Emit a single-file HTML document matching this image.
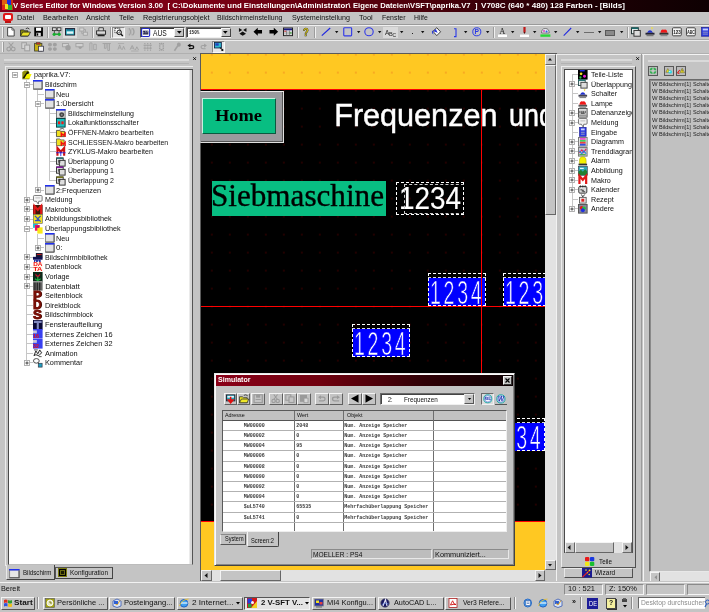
<!DOCTYPE html>
<html><head><meta charset="utf-8">
<style>
*{box-sizing:border-box;margin:0;padding:0}
html,body{width:709px;height:612px;overflow:hidden;background:#c4c4c4;font-family:"Liberation Sans",sans-serif;font-size:8px;color:#222}
.a{position:absolute}
.t{position:absolute;white-space:nowrap;line-height:1;transform-origin:0 0}
.sunk{position:absolute;border:1px solid;border-color:#777 #f2f2f2 #f2f2f2 #777}
.rais{position:absolute;border:1px solid;border-color:#f6f6f6 #666 #666 #f6f6f6}
svg{position:absolute;overflow:visible}
</style></head><body>
<div id="w" style="position:absolute;left:0;top:0;width:709px;height:612px;will-change:transform">
<div class="a" style="left:0px;top:0px;width:709px;height:11.5px;background:linear-gradient(90deg,#86001a 0%,#7a0014 30%,#4a000b 60%,#1c0004 85%,#0e0002 100%);"></div>
<div class="a" style="left:2px;top:0px;width:10.5px;height:10px;background:#d03010;"></div>
<div class="a" style="left:2px;top:0px;width:4.6px;height:5px;background:#e06010;"></div>
<div class="a" style="left:6.6px;top:0px;width:4.8px;height:4.6px;background:#1830e0;"></div>
<div class="a" style="left:7px;top:4.6px;width:5.3px;height:5.4px;background:#30b030;"></div>
<div class="a" style="left:5px;top:4px;width:3.4px;height:4.6px;background:#f0e020;"></div>
<div class="a" style="left:2px;top:6.5px;width:3.4px;height:3.5px;background:#e02020;"></div>
<div class="t" style="left:13.30px;top:1.59px;font-size:7.8px;color:#fff;font-weight:bold;transform:scaleX(0.9877);">V Series Editor for Windows Version 3.00</div>
<div class="t" style="left:167.60px;top:1.59px;font-size:7.8px;color:#fff;font-weight:bold;">[ C:\Dokumente und Einstellungen\Administrator\</div>
<div class="t" style="left:353.40px;top:1.59px;font-size:7.8px;color:#fff;font-weight:bold;transform:scaleX(0.9829);">Eigene Dateien\VSFT\paprika.V7</div>
<div class="t" style="left:474.50px;top:1.59px;font-size:7.8px;color:#fff;font-weight:bold;transform:scaleX(0.9625);">]</div>
<div class="t" style="left:481.00px;top:1.59px;font-size:7.8px;color:#fff;font-weight:bold;transform:scaleX(1.0348);">V708C (640 * 480) 128 Farben - [Bilds]</div>
<div class="a" style="left:0px;top:11.5px;width:709px;height:13px;background:#c4c4c4;"></div>
<div class="a" style="left:3.2px;top:13.3px;width:9.6px;height:7.6px;background:#e01818;border-radius:2px"></div>
<div class="a" style="left:5px;top:15px;width:6px;height:4px;background:#fff;border-radius:1px"></div>
<div class="a" style="left:5px;top:21px;width:6px;height:1.8px;background:#c01010;"></div>
<div class="t" style="left:17.10px;top:13.79px;font-size:7.6px;color:#101010;transform:scaleX(0.9694);">Datei</div>
<div class="t" style="left:42.50px;top:13.79px;font-size:7.6px;color:#101010;transform:scaleX(0.9575);">Bearbeiten</div>
<div class="t" style="left:86.00px;top:13.79px;font-size:7.6px;color:#101010;transform:scaleX(0.9630);">Ansicht</div>
<div class="t" style="left:119.00px;top:13.79px;font-size:7.6px;color:#101010;transform:scaleX(0.9597);">Teile</div>
<div class="t" style="left:142.50px;top:13.79px;font-size:7.6px;color:#101010;transform:scaleX(0.9599);">Registrierungsobjekt</div>
<div class="t" style="left:217.00px;top:13.79px;font-size:7.6px;color:#101010;transform:scaleX(0.9175);">Bildschirmeinstellung</div>
<div class="t" style="left:292.00px;top:13.79px;font-size:7.6px;color:#101010;transform:scaleX(0.9404);">Systemeinstellung</div>
<div class="t" style="left:359.00px;top:13.79px;font-size:7.6px;color:#101010;transform:scaleX(0.9826);">Tool</div>
<div class="t" style="left:381.50px;top:13.79px;font-size:7.6px;color:#101010;transform:scaleX(0.9121);">Fenster</div>
<div class="t" style="left:414.30px;top:13.79px;font-size:7.6px;color:#101010;transform:scaleX(0.9011);">Hilfe</div>
<div class="a" style="left:0px;top:24px;width:709px;height:1px;background:#9a9a9a;"></div>
<div class="a" style="left:0px;top:25px;width:709px;height:1px;background:#f0f0f0;"></div>
<div class="a" style="left:0px;top:39px;width:709px;height:1px;background:#a8a8a8;"></div>
<div class="a" style="left:0px;top:40px;width:709px;height:1px;background:#ececec;"></div>
<div class="a" style="left:0px;top:52.5px;width:709px;height:1px;background:#b0b0b0;"></div>
<div class="a" style="left:0px;top:54px;width:709px;height:1.8px;background:#dedede;"></div>
<div class="a" style="left:1.5px;top:27px;width:1px;height:10.5px;background:#f0f0f0;"></div>
<div class="a" style="left:2.5px;top:27px;width:1px;height:10.5px;background:#9c9c9c;"></div>
<div class="a" style="left:1.5px;top:41.5px;width:1px;height:10.5px;background:#f0f0f0;"></div>
<div class="a" style="left:2.5px;top:41.5px;width:1px;height:10.5px;background:#9c9c9c;"></div>
<svg style="left:7.10px;top:27.30px" width="7.800000000000001" height="9.6" viewBox="0 0 10 10" preserveAspectRatio="none"><path d="M0.8 0.6H6.5L9.2 3V9.4H0.8Z" fill="#fff" stroke="#333" stroke-width="1"/><path d="M6.3 0.6V3.2H9" stroke="#333" stroke-width="0.8" fill="none"/></svg>
<svg style="left:20.00px;top:27.30px" width="10.5" height="9.6" viewBox="0 0 10 10" preserveAspectRatio="none"><path d="M0.5 3H3.5L4.5 4H7.5V9.4H0.5Z" fill="#8a8a10" stroke="#222" stroke-width="0.8"/><path d="M0.5 9.4L2.5 5.3H10L8 9.4Z" fill="#e8e028" stroke="#222" stroke-width="0.8"/><path d="M5.5 1.8Q7.5 0 9 2.2" stroke="#222" stroke-width="0.8" fill="none"/></svg>
<svg style="left:33.50px;top:27.30px" width="9.200000000000003" height="9.6" viewBox="0 0 10 10" preserveAspectRatio="none"><rect x="0.3" y="0.3" width="9.4" height="9.4" fill="#000"/><rect x="2.2" y="0.8" width="5.6" height="3.2" fill="#fff"/><rect x="2.6" y="6" width="4.8" height="3.4" fill="#e0e0e0"/><rect x="3.2" y="6.6" width="1.4" height="2.4" fill="#000"/></svg>
<div class="a" style="left:47px;top:26.5px;width:1px;height:11.5px;background:#9c9c9c;"></div>
<div class="a" style="left:48px;top:26.5px;width:1px;height:11.5px;background:#f0f0f0;"></div>
<svg style="left:51.60px;top:27.30px" width="9.399999999999999" height="9.6" viewBox="0 0 10 10" preserveAspectRatio="none"><rect x="0.5" y="0.8" width="4" height="3" fill="#ddd" stroke="#222" stroke-width="0.8"/><rect x="5.5" y="0.8" width="4" height="3" fill="#ddd" stroke="#222" stroke-width="0.8"/><path d="M2.5 4V7.5H7.5V4" stroke="#222" stroke-width="0.8" fill="none"/><circle cx="2.3" cy="7.6" r="1.7" fill="#18b030"/><circle cx="7.7" cy="7.6" r="1.7" fill="#18b030"/><path d="M2.3 7.6H7.7" stroke="#18b030" stroke-width="1.2"/></svg>
<div class="a" style="left:63.3px;top:26.6px;width:14px;height:11.4px;background:#dcdcdc;"></div>
<svg style="left:65.20px;top:27.30px" width="10.099999999999994" height="9.6" viewBox="0 0 10 10" preserveAspectRatio="none"><rect x="0.5" y="1.6" width="9" height="6.8" fill="#28b0c0" stroke="#223" stroke-width="1"/><rect x="1.8" y="4.6" width="6.4" height="2.4" fill="#e8f4f8"/><path d="M1.5 3H8.5" stroke="#125" stroke-width="0.8"/></svg>
<svg style="left:78.70px;top:27.30px" width="9.299999999999997" height="9.6" viewBox="0 0 10 10" preserveAspectRatio="none"><rect x="0.8" y="1" width="4.4" height="3.2" fill="#d4d4d4" stroke="#a2a2a2" stroke-width="0.9"/><rect x="4.6" y="5.4" width="4.4" height="3.2" fill="#d4d4d4" stroke="#a2a2a2" stroke-width="0.9"/><path d="M3 4.5V7H4.6M7 5V2.6H5.4" stroke="#a2a2a2" stroke-width="0.9" fill="none"/></svg>
<div class="a" style="left:92px;top:26.5px;width:1px;height:11.5px;background:#9c9c9c;"></div>
<div class="a" style="left:93px;top:26.5px;width:1px;height:11.5px;background:#f0f0f0;"></div>
<svg style="left:95.60px;top:27.30px" width="10.200000000000003" height="9.6" viewBox="0 0 10 10" preserveAspectRatio="none"><path d="M2.8 4V0.8H7.2V4" fill="#fff" stroke="#222" stroke-width="0.9"/><rect x="0.6" y="4" width="8.8" height="3.6" fill="#d8d8d8" stroke="#222" stroke-width="0.9"/><path d="M1.5 9H8.5" stroke="#222" stroke-width="1.3"/><path d="M3.4 2.2H6.6" stroke="#888" stroke-width="0.6"/></svg>
<div class="a" style="left:110px;top:26.5px;width:1px;height:11.5px;background:#9c9c9c;"></div>
<div class="a" style="left:111px;top:26.5px;width:1px;height:11.5px;background:#f0f0f0;"></div>
<div class="a" style="left:112px;top:26.6px;width:13.2px;height:11.4px;background:#e6e6e6;border:1px solid;border-color:#8a8a8a #f6f6f6 #f6f6f6 #8a8a8a"></div>
<svg style="left:114.30px;top:27.30px" width="9.299999999999997" height="9.6" viewBox="0 0 10 10" preserveAspectRatio="none"><rect x="1" y="1.4" width="5.4" height="4.6" fill="#fff" stroke="#222" stroke-width="0.9" stroke-dasharray="1.2 0.7"/><circle cx="5.6" cy="5.6" r="2.4" fill="none" stroke="#111" stroke-width="1"/><path d="M7.3 7.3L9.5 9.5" stroke="#111" stroke-width="1.5"/></svg>
<svg style="left:127.00px;top:27.30px" width="10" height="9.6" viewBox="0 0 10 10" preserveAspectRatio="none"><path d="M2 1.2Q5 5 2 8.8M5.5 1.2Q8.5 5 5.5 8.8" stroke="#a2a2a2" stroke-width="1.3" fill="none"/><path d="M1 1.2V8.8M4.6 1.2V8.8" stroke="#b4b4b4" stroke-width="0.8"/></svg>
<div class="a" style="left:139.6px;top:26.6px;width:45px;height:11.6px;background:#fff;border:1px solid;border-color:#555 #f0f0f0 #f0f0f0 #555;box-shadow:inset 1px 1px 0 #333"></div>
<svg style="left:141.20px;top:28.00px" width="9.2" height="9" viewBox="0 0 10 10" preserveAspectRatio="none"><rect x="0.6" y="0.6" width="8.8" height="8.8" rx="1.4" fill="#fff" stroke="#2028c8" stroke-width="1.2"/><rect x="2" y="3" width="6" height="4.2" fill="#181838"/><path d="M2.8 4V6.2M4.5 4V6.2M4.5 4H5.8M6.5 4V6.2M6.5 4H7.6" stroke="#e8e8ff" stroke-width="0.6"/></svg>
<div class="t" style="left:152.90px;top:28.70px;font-size:8.4px;color:#101010;transform:scaleX(0.7990);">AUS</div>
<div class="a" style="left:174.3px;top:28px;width:9.6px;height:9.4px;background:#c4c4c4;border:1px solid;border-color:#f4f4f4 #444 #444 #f4f4f4"></div>
<svg style="left:176.70px;top:31.40px" width="4.6" height="2.8" viewBox="0 0 5 3" preserveAspectRatio="none"><path d="M0 0H5L2.5 3Z" fill="#000"/></svg>
<div class="a" style="left:185.8px;top:26.6px;width:45.7px;height:11.6px;background:#fff;border:1px solid;border-color:#666 #f0f0f0 #f0f0f0 #666;box-shadow:inset 1px 1px 0 #444"></div>
<div class="t" style="left:188.60px;top:29.76px;font-size:5.6px;color:#222;font-family:'Liberation Mono',monospace;font-weight:bold;transform:scaleX(0.7737);">150%</div>
<div class="a" style="left:221px;top:28px;width:9.6px;height:9.4px;background:#c4c4c4;border:1px solid;border-color:#f4f4f4 #444 #444 #f4f4f4"></div>
<svg style="left:223.40px;top:31.40px" width="4.6" height="2.8" viewBox="0 0 5 3" preserveAspectRatio="none"><path d="M0 0H5L2.5 3Z" fill="#000"/></svg>
<svg style="left:238.00px;top:27.30px" width="9.400000000000006" height="9.6" viewBox="0 0 10 10" preserveAspectRatio="none"><path d="M1 1L4.5 3.2L1 5.2ZM9 1L5.5 3.2L9 5.2ZM5 4.8L8.5 7L5 9.2ZM5 4.8L1.5 7L5 9.2Z" fill="#111"/></svg>
<svg style="left:252.50px;top:27.30px" width="9.5" height="9.6" viewBox="0 0 10 10" preserveAspectRatio="none"><path d="M0.5 5L5 0.8V3.2H9.5V6.8H5V9.2Z" fill="#000"/></svg>
<svg style="left:269.00px;top:27.30px" width="9.600000000000023" height="9.6" viewBox="0 0 10 10" preserveAspectRatio="none"><path d="M9.5 5L5 0.8V3.2H0.5V6.8H5V9.2Z" fill="#000"/></svg>
<svg style="left:283.00px;top:27.30px" width="10" height="9.6" viewBox="0 0 10 10" preserveAspectRatio="none"><rect x="0.5" y="1" width="9" height="8" fill="#fff" stroke="#222" stroke-width="1"/><rect x="1" y="1.5" width="8" height="2" fill="#1a1a80"/><path d="M1 5.3H9M1 7.2H9M3.6 3.5V9M6.4 3.5V9" stroke="#555" stroke-width="0.6"/><rect x="1.2" y="3.8" width="2" height="1.2" fill="#d04040"/><rect x="6.6" y="5.6" width="2" height="1.2" fill="#30a030"/></svg>
<div class="a" style="left:297px;top:26.5px;width:1px;height:11.5px;background:#9c9c9c;"></div>
<div class="a" style="left:298px;top:26.5px;width:1px;height:11.5px;background:#f0f0f0;"></div>
<svg style="left:301.50px;top:27.30px" width="8.100000000000023" height="9.6" viewBox="0 0 10 10" preserveAspectRatio="none"><text x="1.2" y="9.3" font-size="11.5" font-weight="bold" font-family="Liberation Sans" fill="#222" stroke="#222" stroke-width="0.6">?</text><text x="1.2" y="9.3" font-size="11.5" font-weight="bold" font-family="Liberation Sans" fill="#c8b818">?</text></svg>
<div class="a" style="left:314px;top:26.5px;width:1px;height:11.5px;background:#9c9c9c;"></div>
<div class="a" style="left:315px;top:26.5px;width:1px;height:11.5px;background:#f0f0f0;"></div>
<svg style="left:321.00px;top:27.30px" width="10" height="9.6" viewBox="0 0 10 10" preserveAspectRatio="none"><path d="M0.8 9L9.2 1" stroke="#2028e0" stroke-width="1.2"/></svg>
<svg style="left:335.30px;top:31.00px" width="3.4" height="2.2" viewBox="0 0 4 2.5" preserveAspectRatio="none"><path d="M0 0H4L2 2.5Z" fill="#111"/></svg>
<svg style="left:343.00px;top:27.30px" width="9.399999999999977" height="9.6" viewBox="0 0 10 10" preserveAspectRatio="none"><rect x="0.8" y="0.8" width="8.4" height="8.4" rx="0.8" fill="none" stroke="#3038e8" stroke-width="1.2"/></svg>
<svg style="left:356.80px;top:31.00px" width="3.4" height="2.2" viewBox="0 0 4 2.5" preserveAspectRatio="none"><path d="M0 0H4L2 2.5Z" fill="#111"/></svg>
<svg style="left:364.00px;top:27.30px" width="10" height="9.6" viewBox="0 0 10 10" preserveAspectRatio="none"><circle cx="5" cy="5" r="4.2" fill="none" stroke="#3038e8" stroke-width="1.1"/></svg>
<svg style="left:378.30px;top:31.00px" width="3.4" height="2.2" viewBox="0 0 4 2.5" preserveAspectRatio="none"><path d="M0 0H4L2 2.5Z" fill="#111"/></svg>
<div class="a" style="left:383.4px;top:26.8px;width:15px;height:11.2px;background:#dadada;"></div>
<svg style="left:385.00px;top:28.50px" width="12" height="8" viewBox="0 0 12 8" preserveAspectRatio="none"><text x="0" y="5.6" font-size="6.4" font-family="Liberation Sans" fill="#222">A</text><text x="4" y="6.8" font-size="5.6" font-family="Liberation Sans" fill="#222">B</text><text x="7.6" y="7.8" font-size="5" font-family="Liberation Sans" fill="#222">C</text></svg>
<svg style="left:400.30px;top:31.00px" width="3.4" height="2.2" viewBox="0 0 4 2.5" preserveAspectRatio="none"><path d="M0 0H4L2 2.5Z" fill="#111"/></svg>
<div class="a" style="left:411.5px;top:32.5px;width:1.3px;height:1.3px;background:#222;"></div>
<svg style="left:421.30px;top:31.00px" width="3.4" height="2.2" viewBox="0 0 4 2.5" preserveAspectRatio="none"><path d="M0 0H4L2 2.5Z" fill="#111"/></svg>
<svg style="left:432.00px;top:27.30px" width="9.5" height="9.6" viewBox="0 0 10 10" preserveAspectRatio="none"><path d="M1 4.5L5 0.8L9 5L5 9Z" fill="#fff" stroke="#222" stroke-width="0.9"/><path d="M1.2 4.5L4 2L6 6Z" fill="#2838d8"/><path d="M0.5 4Q0 7 1.5 7.5" stroke="#2838d8" stroke-width="1" fill="none"/></svg>
<svg style="left:453.00px;top:27.50px" width="4" height="9.4" viewBox="0 0 4 10" preserveAspectRatio="none"><path d="M1 0.8H3V9.2H1" stroke="#2838e8" stroke-width="1.1" fill="none"/></svg>
<svg style="left:464.30px;top:31.00px" width="3.4" height="2.2" viewBox="0 0 4 2.5" preserveAspectRatio="none"><path d="M0 0H4L2 2.5Z" fill="#111"/></svg>
<svg style="left:472.00px;top:27.30px" width="9.600000000000023" height="9.6" viewBox="0 0 10 10" preserveAspectRatio="none"><circle cx="5" cy="5" r="4.2" fill="none" stroke="#2838e8" stroke-width="1"/><text x="2.6" y="7.6" font-size="7" font-weight="bold" font-family="Liberation Sans" fill="#2838e8">P</text></svg>
<svg style="left:486.00px;top:31.00px" width="3.4" height="2.2" viewBox="0 0 4 2.5" preserveAspectRatio="none"><path d="M0 0H4L2 2.5Z" fill="#111"/></svg>
<div class="a" style="left:493px;top:26.5px;width:1px;height:11.5px;background:#9c9c9c;"></div>
<div class="a" style="left:494px;top:26.5px;width:1px;height:11.5px;background:#f0f0f0;"></div>
<svg style="left:498.00px;top:27.00px" width="9" height="10.4" viewBox="0 0 9 10.4" preserveAspectRatio="none"><text x="1.2" y="6.8" font-size="8.4" font-family="Liberation Serif" fill="#222">A</text><rect x="0" y="7.6" width="9" height="2.4" fill="#fff"/></svg>
<svg style="left:511.30px;top:31.00px" width="3.4" height="2.2" viewBox="0 0 4 2.5" preserveAspectRatio="none"><path d="M0 0H4L2 2.5Z" fill="#111"/></svg>
<svg style="left:520.00px;top:27.00px" width="9" height="10.4" viewBox="0 0 9 10.4" preserveAspectRatio="none"><rect x="3.4" y="0" width="2.2" height="5" fill="#c01818"/><path d="M3.4 5H5.6L4.5 7Z" fill="#601010"/><rect x="0" y="7.6" width="9" height="2.4" fill="#fff"/></svg>
<svg style="left:533.00px;top:31.00px" width="3.4" height="2.2" viewBox="0 0 4 2.5" preserveAspectRatio="none"><path d="M0 0H4L2 2.5Z" fill="#111"/></svg>
<svg style="left:540.00px;top:27.00px" width="10.7" height="10.4" viewBox="0 0 10.7 10.4" preserveAspectRatio="none"><path d="M1.5 6Q1.5 1.5 5.3 1.5Q9.2 1.5 9.2 6Z" fill="#e8e8f0" stroke="#555" stroke-width="0.7"/><circle cx="4" cy="4" r="1" fill="#e040c0"/><circle cx="6.6" cy="4.6" r="1" fill="#3060e0"/><rect x="0.4" y="7.4" width="10" height="2.4" fill="#28d838"/></svg>
<svg style="left:554.30px;top:31.00px" width="3.4" height="2.2" viewBox="0 0 4 2.5" preserveAspectRatio="none"><path d="M0 0H4L2 2.5Z" fill="#111"/></svg>
<svg style="left:562.80px;top:27.30px" width="8.900000000000091" height="9.6" viewBox="0 0 10 10" preserveAspectRatio="none"><path d="M0.8 9L9.2 1" stroke="#2028e0" stroke-width="1.2"/></svg>
<svg style="left:576.30px;top:31.00px" width="3.4" height="2.2" viewBox="0 0 4 2.5" preserveAspectRatio="none"><path d="M0 0H4L2 2.5Z" fill="#111"/></svg>
<div class="a" style="left:583.5px;top:32.2px;width:10.5px;height:1.2px;background:#6c6c6c;"></div>
<svg style="left:598.30px;top:31.00px" width="3.4" height="2.2" viewBox="0 0 4 2.5" preserveAspectRatio="none"><path d="M0 0H4L2 2.5Z" fill="#111"/></svg>
<div class="a" style="left:605px;top:29.5px;width:10px;height:6.2px;background:#8a8a8a;border:1px solid #5a5a5a"></div>
<svg style="left:619.70px;top:31.00px" width="3.4" height="2.2" viewBox="0 0 4 2.5" preserveAspectRatio="none"><path d="M0 0H4L2 2.5Z" fill="#111"/></svg>
<div class="a" style="left:626.5px;top:26.5px;width:1px;height:11.5px;background:#9c9c9c;"></div>
<div class="a" style="left:627.5px;top:26.5px;width:1px;height:11.5px;background:#f0f0f0;"></div>
<svg style="left:630.70px;top:27.30px" width="9.799999999999955" height="9.6" viewBox="0 0 10 10" preserveAspectRatio="none"><rect x="0.5" y="0.8" width="7" height="6.2" fill="#e8f0f0" stroke="#233" stroke-width="1"/><rect x="0.5" y="0.5" width="7" height="1.6" fill="#186868"/><rect x="3" y="3.6" width="6.5" height="6" fill="#ddd" stroke="#333" stroke-width="1"/></svg>
<svg style="left:645.00px;top:27.30px" width="10" height="9.6" viewBox="0 0 10 10" preserveAspectRatio="none"><path d="M6 0L8.4 0.8L6.8 2.6" fill="#f0e040"/><path d="M2 6Q5 1 8 6Z" fill="#2030d0"/><rect x="0.5" y="6" width="9" height="2" fill="#223"/><rect x="1.5" y="8" width="7" height="1.6" fill="#777"/></svg>
<svg style="left:658.70px;top:27.30px" width="9.899999999999977" height="9.6" viewBox="0 0 10 10" preserveAspectRatio="none"><path d="M1.5 6Q2 1.5 5 2.8Q8 1.5 8.5 6Z" fill="#f01818"/><rect x="0.5" y="6" width="9" height="2" fill="#333"/><rect x="1.5" y="8" width="7" height="1.6" fill="#888"/></svg>
<svg style="left:672.00px;top:27.30px" width="9.799999999999955" height="9.6" viewBox="0 0 10 10" preserveAspectRatio="none"><rect x="0.5" y="0.8" width="9" height="8.4" rx="1" fill="#f4f4f4" stroke="#333" stroke-width="0.9"/><text x="1.2" y="7" font-size="5" font-weight="bold" font-family="Liberation Sans" fill="#222" textLength="7.6" lengthAdjust="spacingAndGlyphs">123</text></svg>
<svg style="left:686.00px;top:27.30px" width="9.799999999999955" height="9.6" viewBox="0 0 10 10" preserveAspectRatio="none"><rect x="0.5" y="0.8" width="9" height="8.4" rx="1" fill="#f4f4f4" stroke="#333" stroke-width="0.9"/><text x="1.2" y="7" font-size="5" font-weight="bold" font-family="Liberation Sans" fill="#222" textLength="7.6" lengthAdjust="spacingAndGlyphs">ABC</text></svg>
<svg style="left:700.80px;top:27.30px" width="8.700000000000045" height="9.6" viewBox="0 0 10 10" preserveAspectRatio="none"><rect x="0.6" y="0.4" width="8.8" height="9.2" fill="#2838e0" stroke="#1a1a90" stroke-width="0.7"/><rect x="2" y="1.6" width="6" height="2" fill="#c8d0ff"/><path d="M2 5.4H8M2 7.4H8" stroke="#aab" stroke-width="0.9"/></svg>
<svg style="left:6.00px;top:41.60px" width="10" height="9.6" viewBox="0 0 10 10" preserveAspectRatio="none"><circle cx="2.8" cy="7.4" r="1.9" fill="none" stroke="#a0a0a0" stroke-width="1.2"/><circle cx="7.2" cy="7.4" r="1.9" fill="none" stroke="#a0a0a0" stroke-width="1.2"/><path d="M2.6 0.5L7 5.6M7.4 0.5L3 5.6" stroke="#a0a0a0" stroke-width="1.1"/></svg>
<svg style="left:20.60px;top:41.60px" width="9.399999999999999" height="9.6" viewBox="0 0 10 10" preserveAspectRatio="none"><rect x="0.8" y="0.8" width="5" height="6" fill="#d4d4d4" stroke="#a0a0a0" stroke-width="1.1"/><rect x="4" y="3.2" width="5.2" height="6" fill="#d4d4d4" stroke="#a0a0a0" stroke-width="1.1"/></svg>
<svg style="left:33.90px;top:41.60px" width="9.800000000000004" height="9.6" viewBox="0 0 10 10" preserveAspectRatio="none"><rect x="0.6" y="1.4" width="7.4" height="8" fill="#c8b010" stroke="#443" stroke-width="0.9"/><rect x="2.4" y="0.4" width="3.8" height="2" fill="#c03020" stroke="#443" stroke-width="0.5"/><rect x="4.6" y="4.4" width="5" height="5.2" fill="#f4f4f4" stroke="#334" stroke-width="0.8"/></svg>
<svg style="left:47.40px;top:41.60px" width="10.600000000000001" height="9.6" viewBox="0 0 10 10" preserveAspectRatio="none"><circle cx="2.8" cy="2.8" r="1.9" fill="#a0a0a0"/><circle cx="7.4" cy="2.8" r="1.9" fill="#a0a0a0"/><circle cx="2.8" cy="7.4" r="1.9" fill="#a0a0a0"/><circle cx="7.4" cy="7.4" r="1.9" fill="#a0a0a0"/></svg>
<svg style="left:61.80px;top:41.60px" width="9.700000000000003" height="9.6" viewBox="0 0 10 10" preserveAspectRatio="none"><rect x="0.6" y="1.6" width="6" height="3.4" fill="#d0d0d0" stroke="#a0a0a0" stroke-width="0.9"/><circle cx="6.2" cy="6" r="2.8" fill="#a0a0a0"/></svg>
<svg style="left:75.30px;top:41.60px" width="9.299999999999997" height="9.6" viewBox="0 0 10 10" preserveAspectRatio="none"><rect x="1" y="1.6" width="7.6" height="3.4" fill="#d0d0d0" stroke="#a0a0a0" stroke-width="0.9"/><path d="M3.4 5Q5.4 9.6 8 5Z" fill="#a0a0a0"/></svg>
<svg style="left:88.90px;top:41.60px" width="8.5" height="9.6" viewBox="0 0 10 10" preserveAspectRatio="none"><path d="M1 1V9M1 1H3.5V9M5.5 2.4H8.6V8H5.5Z" stroke="#a0a0a0" stroke-width="0.9" fill="none"/></svg>
<svg style="left:102.40px;top:41.60px" width="9.399999999999991" height="9.6" viewBox="0 0 10 10" preserveAspectRatio="none"><path d="M0.6 1.6H9.4M2.6 1.6V6.6H4.4V1.6M6.2 1.6V8.8H8V1.6" stroke="#a0a0a0" stroke-width="0.9" fill="none"/></svg>
<svg style="left:116.70px;top:41.60px" width="8.899999999999991" height="9.6" viewBox="0 0 10 10" preserveAspectRatio="none"><path d="M1 8L3 3L5 8M6 8L7.4 4.4L9 8M1.8 6.2H4.2" stroke="#a0a0a0" stroke-width="0.9" fill="none"/><path d="M1 1.6H8" stroke="#a0a0a0" stroke-width="0.7"/></svg>
<svg style="left:129.00px;top:41.60px" width="10.599999999999994" height="9.6" viewBox="0 0 10 10" preserveAspectRatio="none"><path d="M1 8L3 3.6L5 8M6 8.4L7.4 5L9 8.4M1.8 6.4H4.2" stroke="#a0a0a0" stroke-width="0.9" fill="none"/><path d="M2 9.4H9" stroke="#a0a0a0" stroke-width="0.7"/></svg>
<svg style="left:143.00px;top:41.60px" width="9.400000000000006" height="9.6" viewBox="0 0 10 10" preserveAspectRatio="none"><path d="M0.6 3.4H9.4M0.6 6.4H9.4" stroke="#a0a0a0" stroke-width="1"/><path d="M2 1V9M5 1V9M8 1V9" stroke="#a0a0a0" stroke-width="1.2" stroke-dasharray="1.4 0.9"/></svg>
<svg style="left:157.00px;top:41.60px" width="9" height="9.6" viewBox="0 0 10 10" preserveAspectRatio="none"><path d="M3 1V9M7 1V9" stroke="#a0a0a0" stroke-width="1.6" stroke-dasharray="1.6 0.8"/><path d="M5 0.6L6.6 2.6H3.4ZM5 9.4L6.6 7.4H3.4Z" fill="#a0a0a0"/></svg>
<svg style="left:172.50px;top:41.60px" width="8.900000000000006" height="9.6" viewBox="0 0 10 10" preserveAspectRatio="none"><circle cx="6.6" cy="2.8" r="2.2" fill="#a0a0a0"/><path d="M5.4 4L1.6 9.2" stroke="#a0a0a0" stroke-width="1.8"/></svg>
<svg style="left:186.90px;top:43.40px" width="7.8" height="6.4" viewBox="0 0 10 9" preserveAspectRatio="none"><path d="M2.4 8H6.2Q8.6 8 8.6 5.7Q8.6 3.6 6.2 3.6H3.4" stroke="#111" stroke-width="1.7" fill="none"/><path d="M4.4 0.6L0.6 3.6L4.4 6.6Z" fill="#111"/></svg>
<svg style="left:199.70px;top:43.40px" width="7.4" height="6.4" viewBox="0 0 10 9" preserveAspectRatio="none"><path d="M7.6 8H3.8Q1.4 8 1.4 5.7Q1.4 3.6 3.8 3.6H6.6" stroke="#a0a0a0" stroke-width="1.5" fill="none"/><path d="M5.6 0.6L9.4 3.6L5.6 6.6Z" fill="#a0a0a0"/></svg>
<div class="a" style="left:211.6px;top:41px;width:13.4px;height:11.6px;background:#e8e8e8;border:1px solid;border-color:#8a8a8a #f8f8f8 #f8f8f8 #8a8a8a"></div>
<svg style="left:213.60px;top:42.40px" width="9.8" height="9.2" viewBox="0 0 10 10" preserveAspectRatio="none"><rect x="0.5" y="0.5" width="7" height="6" fill="#30b8d0" stroke="#124" stroke-width="0.9"/><rect x="1.4" y="1.4" width="3.4" height="2.6" fill="#2040c0"/><path d="M6 6L9.4 9.4M7.6 9.4L9.4 7.6" stroke="#111" stroke-width="1.1"/></svg>
<div class="a" style="left:0px;top:54px;width:201px;height:528px;background:#c4c4c4;"></div>
<div class="a" style="left:4px;top:59px;width:185px;height:2.2px;background:#dadada;"></div>
<div class="a" style="left:4px;top:63px;width:185px;height:1px;background:#b2b2b2;"></div>
<svg style="left:193.00px;top:57.30px" width="3.2" height="3.2" viewBox="0 0 4 4" preserveAspectRatio="none"><path d="M0.3 0.3L3.7 3.7M3.7 0.3L0.3 3.7" stroke="#000" stroke-width="1.1"/></svg>
<div class="a" style="left:5px;top:66px;width:188px;height:500px;border-top:1px solid #ececec;border-left:1px solid #ececec"></div>
<div class="a" style="left:7.5px;top:69px;width:185px;height:496px;background:#fff;border:1px solid;border-color:#4a4a4a #555 #bcbcbc #4a4a4a;box-shadow:inset -2.5px 0 0 #d8d8d8"></div>
<div class="a" style="left:26.05px;top:80.1px;width:1px;height:282.85px;border-left:1px solid #c6c6c6"></div>
<div class="a" style="left:37.3px;top:89.695px;width:1px;height:100.54500000000002px;border-left:1px solid #c6c6c6"></div>
<div class="a" style="left:48.55px;top:108.88499999999999px;width:1px;height:71.75999999999999px;border-left:1px solid #c6c6c6"></div>
<div class="a" style="left:37.3px;top:233.62px;width:1px;height:14.189999999999998px;border-left:1px solid #c6c6c6"></div>
<svg style="left:12.30px;top:72.10px" width="6" height="6" viewBox="0 0 6 6" preserveAspectRatio="none"><rect x="0.5" y="0.5" width="5" height="5" fill="#fff" stroke="#a8a8a8" stroke-width="0.9"/><path d="M1.4 3H4.6" stroke="#333" stroke-width="0.9"/></svg>
<svg style="left:22.00px;top:70.20px" width="9.6" height="9.6" viewBox="0 0 10 10" preserveAspectRatio="none"><path d="M0.3 2.2L2.8 0.4H6.4L7.6 2.2V9.2H0.3Z" fill="#90900a"/><path d="M0.6 8.4L5.6 1.2L7.4 2.4L2.6 9.2Z" fill="#161600"/><path d="M2.2 9.4L5.2 4.2H10L7.6 9.4Z" fill="#f6f600"/><path d="M0.3 9.3H7.6" stroke="#55550a" stroke-width="0.6"/></svg>
<div class="t" style="left:33.90px;top:71.49px;font-size:7.6px;color:#101010;transform:scaleX(0.9520);">paprika.V7:</div>
<div class="a" style="left:26.55px;top:84.195px;width:6.699999999999999px;height:1px;border-top:1px solid #c6c6c6"></div>
<svg style="left:23.55px;top:81.69px" width="6" height="6" viewBox="0 0 6 6" preserveAspectRatio="none"><rect x="0.5" y="0.5" width="5" height="5" fill="#fff" stroke="#a8a8a8" stroke-width="0.9"/><path d="M1.4 3H4.6" stroke="#333" stroke-width="0.9"/></svg>
<svg style="left:33.25px;top:79.79px" width="9.6" height="9.6" viewBox="0 0 10 10" preserveAspectRatio="none"><rect x="0.5" y="1" width="9" height="8.5" fill="#e2e2e2" stroke="#8a8a8a" stroke-width="1"/><rect x="0" y="0" width="10" height="1.6" fill="#2030f0"/><path d="M0.5 9.5H9.5V1.5" stroke="#555" stroke-width="1" fill="none"/></svg>
<div class="t" style="left:45.15px;top:81.08px;font-size:7.6px;color:#101010;transform:scaleX(0.9044);">Bildschirm</div>
<div class="a" style="left:37.8px;top:93.78999999999999px;width:6.700000000000003px;height:1px;border-top:1px solid #c6c6c6"></div>
<svg style="left:44.50px;top:89.39px" width="9.6" height="9.6" viewBox="0 0 10 10" preserveAspectRatio="none"><rect x="0.5" y="1" width="9" height="8.5" fill="#e2e2e2" stroke="#8a8a8a" stroke-width="1"/><rect x="0" y="0" width="10" height="1.6" fill="#2030f0"/><path d="M0.5 9.5H9.5V1.5" stroke="#555" stroke-width="1" fill="none"/></svg>
<div class="t" style="left:56.40px;top:90.68px;font-size:7.6px;color:#101010;transform:scaleX(0.9611);">Neu</div>
<div class="a" style="left:37.8px;top:103.38499999999999px;width:6.700000000000003px;height:1px;border-top:1px solid #c6c6c6"></div>
<svg style="left:34.80px;top:100.88px" width="6" height="6" viewBox="0 0 6 6" preserveAspectRatio="none"><rect x="0.5" y="0.5" width="5" height="5" fill="#fff" stroke="#a8a8a8" stroke-width="0.9"/><path d="M1.4 3H4.6" stroke="#333" stroke-width="0.9"/></svg>
<svg style="left:44.50px;top:98.98px" width="9.6" height="9.6" viewBox="0 0 10 10" preserveAspectRatio="none"><rect x="0.5" y="1" width="9" height="8.5" fill="#e2e2e2" stroke="#8a8a8a" stroke-width="1"/><rect x="0" y="0" width="10" height="1.6" fill="#2030f0"/><path d="M0.5 9.5H9.5V1.5" stroke="#555" stroke-width="1" fill="none"/></svg>
<div class="t" style="left:56.40px;top:100.27px;font-size:7.6px;color:#101010;transform:scaleX(0.9782);">1:Übersicht</div>
<div class="a" style="left:49.05px;top:112.97999999999999px;width:6.700000000000003px;height:1px;border-top:1px solid #c6c6c6"></div>
<svg style="left:55.75px;top:108.58px" width="9.6" height="9.6" viewBox="0 0 10 10" preserveAspectRatio="none"><rect x="0.5" y="1" width="9" height="8.5" fill="#e2e2e2" stroke="#777" stroke-width="1"/><rect x="0" y="0" width="10" height="1.6" fill="#2030f0"/><circle cx="6" cy="6" r="2.6" fill="#444"/><circle cx="6" cy="6" r="1" fill="#888"/></svg>
<div class="t" style="left:67.65px;top:109.87px;font-size:7.6px;color:#101010;transform:scaleX(0.9245);">Bildschirmeinstellung</div>
<div class="a" style="left:49.05px;top:122.57499999999999px;width:6.700000000000003px;height:1px;border-top:1px solid #c6c6c6"></div>
<svg style="left:55.75px;top:118.17px" width="9.6" height="9.6" viewBox="0 0 10 10" preserveAspectRatio="none"><rect x="0.5" y="0.5" width="9" height="9" fill="#18c0c0" stroke="#0a4040" stroke-width="1"/><rect x="2" y="3.5" width="2.4" height="3" fill="#f01818"/><rect x="5.6" y="3.5" width="2.4" height="3" fill="#f01818"/></svg>
<div class="t" style="left:67.65px;top:119.46px;font-size:7.6px;color:#101010;transform:scaleX(0.9428);">Lokalfunktionsschalter</div>
<div class="a" style="left:49.05px;top:132.17000000000002px;width:6.700000000000003px;height:1px;border-top:1px solid #c6c6c6"></div>
<svg style="left:55.75px;top:127.77px" width="9.6" height="9.6" viewBox="0 0 10 10" preserveAspectRatio="none"><path d="M0.5 2.5H4L5 3.5H9V9H0.5Z" fill="#f0e020" stroke="#333" stroke-width="0.8"/><path d="M4 1.2L7 0.5L8.5 1.5" stroke="#222" stroke-width="0.8" fill="none"/><path d="M5.5 9.5V5.5L7.5 7.5L9.5 5.5V9.5" stroke="#f01010" stroke-width="1.5" fill="none"/></svg>
<div class="t" style="left:67.65px;top:129.06px;font-size:7.6px;color:#101010;transform:scaleX(0.9212);">ÖFFNEN-Makro bearbeiten</div>
<div class="a" style="left:49.05px;top:141.765px;width:6.700000000000003px;height:1px;border-top:1px solid #c6c6c6"></div>
<svg style="left:55.75px;top:137.36px" width="9.6" height="9.6" viewBox="0 0 10 10" preserveAspectRatio="none"><path d="M0.5 2H4L5 3H8.5V9H0.5Z" fill="#f0e020" stroke="#555" stroke-width="0.8"/><path d="M5.5 9.5V5.5L7.5 7.5L9.5 5.5V9.5" stroke="#f01010" stroke-width="1.5" fill="none"/></svg>
<div class="t" style="left:67.65px;top:138.65px;font-size:7.6px;color:#101010;transform:scaleX(0.9133);">SCHLIESSEN-Makro bearbeiten</div>
<div class="a" style="left:49.05px;top:151.36px;width:6.700000000000003px;height:1px;border-top:1px solid #c6c6c6"></div>
<svg style="left:55.75px;top:146.96px" width="9.6" height="9.6" viewBox="0 0 10 10" preserveAspectRatio="none"><path d="M1.5 9V1L5 5L8.5 1V9" stroke="#d01010" stroke-width="2.2" fill="none"/><path d="M0 6H10M5 4.5V9.5" stroke="#2020e0" stroke-width="0.9"/></svg>
<div class="t" style="left:67.65px;top:148.25px;font-size:7.6px;color:#101010;transform:scaleX(0.9305);">ZYKLUS-Makro bearbeiten</div>
<div class="a" style="left:49.05px;top:160.95499999999998px;width:6.700000000000003px;height:1px;border-top:1px solid #c6c6c6"></div>
<svg style="left:55.75px;top:156.55px" width="9.6" height="9.6" viewBox="0 0 10 10" preserveAspectRatio="none"><rect x="0.5" y="1" width="7" height="6.5" fill="#e8e8e8" stroke="#333" stroke-width="1"/><rect x="0.5" y="0.5" width="7" height="1.5" fill="#207070"/><rect x="3.5" y="3.5" width="6" height="6" fill="#ddd" stroke="#333" stroke-width="1"/><path d="M2.5 3V6M4 3V6" stroke="#333" stroke-width="0.8"/></svg>
<div class="t" style="left:67.65px;top:157.84px;font-size:7.6px;color:#101010;transform:scaleX(0.9226);">Überlappung 0</div>
<div class="a" style="left:49.05px;top:170.55px;width:6.700000000000003px;height:1px;border-top:1px solid #c6c6c6"></div>
<svg style="left:55.75px;top:166.15px" width="9.6" height="9.6" viewBox="0 0 10 10" preserveAspectRatio="none"><rect x="0.5" y="1" width="7" height="6.5" fill="#e8e8e8" stroke="#333" stroke-width="1"/><rect x="0.5" y="0.5" width="7" height="1.5" fill="#8010a0"/><rect x="3.5" y="3.5" width="6" height="6" fill="#ddd" stroke="#333" stroke-width="1"/><path d="M2.5 3V6" stroke="#333" stroke-width="0.8"/></svg>
<div class="t" style="left:67.65px;top:167.44px;font-size:7.6px;color:#101010;transform:scaleX(0.9226);">Überlappung 1</div>
<div class="a" style="left:49.05px;top:180.14499999999998px;width:6.700000000000003px;height:1px;border-top:1px solid #c6c6c6"></div>
<svg style="left:55.75px;top:175.74px" width="9.6" height="9.6" viewBox="0 0 10 10" preserveAspectRatio="none"><rect x="0.5" y="1" width="7" height="6.5" fill="#e8e8e8" stroke="#333" stroke-width="1"/><rect x="0.5" y="0.5" width="7" height="1.5" fill="#707010"/><rect x="3.5" y="3.5" width="6" height="6" fill="#ddd" stroke="#333" stroke-width="1"/><path d="M2.5 3V6M4 3V6" stroke="#333" stroke-width="0.8"/></svg>
<div class="t" style="left:67.65px;top:177.03px;font-size:7.6px;color:#101010;transform:scaleX(0.9226);">Überlappung 2</div>
<div class="a" style="left:37.8px;top:189.74px;width:6.700000000000003px;height:1px;border-top:1px solid #c6c6c6"></div>
<svg style="left:34.80px;top:187.24px" width="6" height="6" viewBox="0 0 6 6" preserveAspectRatio="none"><rect x="0.5" y="0.5" width="5" height="5" fill="#fff" stroke="#a8a8a8" stroke-width="0.9"/><path d="M1.4 3H4.6" stroke="#333" stroke-width="0.9"/><path d="M3 1.4V4.6" stroke="#333" stroke-width="0.9"/></svg>
<svg style="left:44.50px;top:185.34px" width="9.6" height="9.6" viewBox="0 0 10 10" preserveAspectRatio="none"><rect x="0.5" y="1" width="9" height="8.5" fill="#e2e2e2" stroke="#8a8a8a" stroke-width="1"/><rect x="0" y="0" width="10" height="1.6" fill="#2030f0"/><path d="M0.5 9.5H9.5V1.5" stroke="#555" stroke-width="1" fill="none"/></svg>
<div class="t" style="left:56.40px;top:186.63px;font-size:7.6px;color:#101010;transform:scaleX(0.9616);">2:Frequenzen</div>
<div class="a" style="left:26.55px;top:199.335px;width:6.699999999999999px;height:1px;border-top:1px solid #c6c6c6"></div>
<svg style="left:23.55px;top:196.84px" width="6" height="6" viewBox="0 0 6 6" preserveAspectRatio="none"><rect x="0.5" y="0.5" width="5" height="5" fill="#fff" stroke="#a8a8a8" stroke-width="0.9"/><path d="M1.4 3H4.6" stroke="#333" stroke-width="0.9"/><path d="M3 1.4V4.6" stroke="#333" stroke-width="0.9"/></svg>
<svg style="left:33.25px;top:194.94px" width="9.6" height="9.6" viewBox="0 0 10 10" preserveAspectRatio="none"><path d="M1.5 0.5H8.5Q9.5 0.5 9.5 1.5V5.5Q9.5 6.5 8.5 6.5H6L5.5 9.5L3.5 6.5H1.5Q0.5 6.5 0.5 5.5V1.5Q0.5 0.5 1.5 0.5Z" fill="#f4f4f4" stroke="#666" stroke-width="0.9"/><path d="M2.5 3H7.5" stroke="#bbb" stroke-width="1"/></svg>
<div class="t" style="left:45.15px;top:196.22px;font-size:7.6px;color:#101010;transform:scaleX(0.9399);">Meldung</div>
<div class="a" style="left:26.55px;top:208.93px;width:6.699999999999999px;height:1px;border-top:1px solid #c6c6c6"></div>
<svg style="left:23.55px;top:206.43px" width="6" height="6" viewBox="0 0 6 6" preserveAspectRatio="none"><rect x="0.5" y="0.5" width="5" height="5" fill="#fff" stroke="#a8a8a8" stroke-width="0.9"/><path d="M1.4 3H4.6" stroke="#333" stroke-width="0.9"/><path d="M3 1.4V4.6" stroke="#333" stroke-width="0.9"/></svg>
<svg style="left:33.25px;top:204.53px" width="9.6" height="9.6" viewBox="0 0 10 10" preserveAspectRatio="none"><rect x="0" y="0" width="10" height="10" fill="#401808"/><path d="M1.5 9.5V1L5 5L8.5 1V9.5" stroke="#e01818" stroke-width="2.2" fill="none"/></svg>
<div class="t" style="left:45.15px;top:205.82px;font-size:7.6px;color:#101010;transform:scaleX(0.9239);">Makroblock</div>
<div class="a" style="left:26.55px;top:218.525px;width:6.699999999999999px;height:1px;border-top:1px solid #c6c6c6"></div>
<svg style="left:23.55px;top:216.03px" width="6" height="6" viewBox="0 0 6 6" preserveAspectRatio="none"><rect x="0.5" y="0.5" width="5" height="5" fill="#fff" stroke="#a8a8a8" stroke-width="0.9"/><path d="M1.4 3H4.6" stroke="#333" stroke-width="0.9"/><path d="M3 1.4V4.6" stroke="#333" stroke-width="0.9"/></svg>
<svg style="left:33.25px;top:214.12px" width="9.6" height="9.6" viewBox="0 0 10 10" preserveAspectRatio="none"><rect x="0.3" y="0.3" width="9.4" height="9.4" fill="#f0e020" stroke="#555" stroke-width="0.6"/><path d="M2 2L8 8M8 2L4 6M2 7H6" stroke="#3050c0" stroke-width="1.3"/></svg>
<div class="t" style="left:45.15px;top:215.41px;font-size:7.6px;color:#101010;transform:scaleX(0.9567);">Abbildungsbibliothek</div>
<div class="a" style="left:26.55px;top:228.12px;width:6.699999999999999px;height:1px;border-top:1px solid #c6c6c6"></div>
<svg style="left:23.55px;top:225.62px" width="6" height="6" viewBox="0 0 6 6" preserveAspectRatio="none"><rect x="0.5" y="0.5" width="5" height="5" fill="#fff" stroke="#a8a8a8" stroke-width="0.9"/><path d="M1.4 3H4.6" stroke="#333" stroke-width="0.9"/></svg>
<svg style="left:33.25px;top:223.72px" width="9.6" height="9.6" viewBox="0 0 10 10" preserveAspectRatio="none"><rect x="0" y="0" width="5" height="4" fill="#20c0d0"/><rect x="2" y="1" width="5" height="6" fill="#f01060"/><rect x="4.5" y="3.5" width="5.5" height="6.5" fill="#f8e818"/><rect x="3.5" y="2" width="3" height="2" fill="#b01070"/></svg>
<div class="t" style="left:45.15px;top:225.01px;font-size:7.6px;color:#101010;transform:scaleX(0.9543);">Überlappungsbibliothek</div>
<div class="a" style="left:37.8px;top:237.715px;width:6.700000000000003px;height:1px;border-top:1px solid #c6c6c6"></div>
<svg style="left:44.50px;top:233.31px" width="9.6" height="9.6" viewBox="0 0 10 10" preserveAspectRatio="none"><rect x="0.5" y="1" width="9" height="8.5" fill="#e2e2e2" stroke="#8a8a8a" stroke-width="1"/><rect x="0" y="0" width="10" height="1.6" fill="#2030f0"/><path d="M0.5 9.5H9.5V1.5" stroke="#555" stroke-width="1" fill="none"/></svg>
<div class="t" style="left:56.40px;top:234.60px;font-size:7.6px;color:#101010;transform:scaleX(0.9611);">Neu</div>
<div class="a" style="left:37.8px;top:247.31px;width:6.700000000000003px;height:1px;border-top:1px solid #c6c6c6"></div>
<svg style="left:34.80px;top:244.81px" width="6" height="6" viewBox="0 0 6 6" preserveAspectRatio="none"><rect x="0.5" y="0.5" width="5" height="5" fill="#fff" stroke="#a8a8a8" stroke-width="0.9"/><path d="M1.4 3H4.6" stroke="#333" stroke-width="0.9"/><path d="M3 1.4V4.6" stroke="#333" stroke-width="0.9"/></svg>
<svg style="left:44.50px;top:242.91px" width="9.6" height="9.6" viewBox="0 0 10 10" preserveAspectRatio="none"><rect x="0.5" y="1" width="9" height="8.5" fill="#e2e2e2" stroke="#8a8a8a" stroke-width="1"/><rect x="0" y="0" width="10" height="1.6" fill="#2030f0"/><path d="M0.5 9.5H9.5V1.5" stroke="#555" stroke-width="1" fill="none"/></svg>
<div class="t" style="left:56.40px;top:244.20px;font-size:7.6px;color:#101010;transform:scaleX(1.0413);">0:</div>
<div class="a" style="left:26.55px;top:256.905px;width:6.699999999999999px;height:1px;border-top:1px solid #c6c6c6"></div>
<svg style="left:23.55px;top:254.40px" width="6" height="6" viewBox="0 0 6 6" preserveAspectRatio="none"><rect x="0.5" y="0.5" width="5" height="5" fill="#fff" stroke="#a8a8a8" stroke-width="0.9"/><path d="M1.4 3H4.6" stroke="#333" stroke-width="0.9"/><path d="M3 1.4V4.6" stroke="#333" stroke-width="0.9"/></svg>
<svg style="left:33.25px;top:252.50px" width="9.6" height="9.6" viewBox="0 0 10 10" preserveAspectRatio="none"><rect x="3" y="0" width="7" height="4.5" fill="#181830"/><rect x="4" y="1" width="5" height="1" fill="#d02020"/><rect x="0" y="4" width="10" height="3" fill="#101050"/><rect x="1" y="7" width="7" height="3" fill="#2030a0"/><rect x="2" y="8" width="1.2" height="1.2" fill="#fff"/><rect x="5" y="8" width="1.2" height="1.2" fill="#fff"/></svg>
<div class="t" style="left:45.15px;top:253.79px;font-size:7.6px;color:#101010;transform:scaleX(0.9336);">Bildschirmbibliothek</div>
<div class="a" style="left:26.55px;top:266.5px;width:6.699999999999999px;height:1px;border-top:1px solid #c6c6c6"></div>
<svg style="left:23.55px;top:264.00px" width="6" height="6" viewBox="0 0 6 6" preserveAspectRatio="none"><rect x="0.5" y="0.5" width="5" height="5" fill="#fff" stroke="#a8a8a8" stroke-width="0.9"/><path d="M1.4 3H4.6" stroke="#333" stroke-width="0.9"/><path d="M3 1.4V4.6" stroke="#333" stroke-width="0.9"/></svg>
<svg style="left:33.25px;top:262.10px" width="9.6" height="9.6" viewBox="0 0 10 10" preserveAspectRatio="none"><rect x="0" y="0" width="10" height="10" fill="#fff4e8"/><text x="0.2" y="4.6" font-size="5.4" font-weight="bold" fill="#f01010" font-family="Liberation Sans" textLength="9.6" lengthAdjust="spacingAndGlyphs">DA</text><text x="0.2" y="9.8" font-size="5.4" font-weight="bold" fill="#f01010" font-family="Liberation Sans" textLength="9.6" lengthAdjust="spacingAndGlyphs">TA</text></svg>
<div class="t" style="left:45.15px;top:263.39px;font-size:7.6px;color:#101010;transform:scaleX(0.9626);">Datenblock</div>
<div class="a" style="left:26.55px;top:276.095px;width:6.699999999999999px;height:1px;border-top:1px solid #c6c6c6"></div>
<svg style="left:23.55px;top:273.60px" width="6" height="6" viewBox="0 0 6 6" preserveAspectRatio="none"><rect x="0.5" y="0.5" width="5" height="5" fill="#fff" stroke="#a8a8a8" stroke-width="0.9"/><path d="M1.4 3H4.6" stroke="#333" stroke-width="0.9"/><path d="M3 1.4V4.6" stroke="#333" stroke-width="0.9"/></svg>
<svg style="left:33.25px;top:271.70px" width="9.6" height="9.6" viewBox="0 0 10 10" preserveAspectRatio="none"><rect x="0" y="0" width="10" height="10" fill="#0a2a18"/><path d="M2.5 1.5L5 4L7.5 1.5V3.5L5 6L2.5 3.5Z" fill="#c01030"/><path d="M5 5V9M2 7L5 9L8 7" stroke="#20b040" stroke-width="1.2" fill="none"/></svg>
<div class="t" style="left:45.15px;top:272.98px;font-size:7.6px;color:#101010;transform:scaleX(0.9505);">Vorlage</div>
<div class="a" style="left:26.55px;top:285.69px;width:6.699999999999999px;height:1px;border-top:1px solid #c6c6c6"></div>
<svg style="left:23.55px;top:283.19px" width="6" height="6" viewBox="0 0 6 6" preserveAspectRatio="none"><rect x="0.5" y="0.5" width="5" height="5" fill="#fff" stroke="#a8a8a8" stroke-width="0.9"/><path d="M1.4 3H4.6" stroke="#333" stroke-width="0.9"/><path d="M3 1.4V4.6" stroke="#333" stroke-width="0.9"/></svg>
<svg style="left:33.25px;top:281.29px" width="9.6" height="9.6" viewBox="0 0 10 10" preserveAspectRatio="none"><rect x="0" y="0" width="10" height="10" fill="#666"/><path d="M2 1V10M4.5 1V10M7 1V10" stroke="#222" stroke-width="1.2"/><rect x="0" y="0" width="10" height="1.5" fill="#999"/></svg>
<div class="t" style="left:45.15px;top:282.58px;font-size:7.6px;color:#101010;">Datenblatt</div>
<div class="a" style="left:26.55px;top:295.28499999999997px;width:6.699999999999999px;height:1px;border-top:1px solid #c6c6c6"></div>
<svg style="left:33.25px;top:290.88px" width="9.6" height="9.6" viewBox="0 0 10 10" preserveAspectRatio="none"><text x="0.5" y="9.6" font-size="13" font-weight="bold" fill="#2a0800" font-family="Liberation Sans" textLength="9.5" lengthAdjust="spacingAndGlyphs">P</text><text x="0" y="9" font-size="13" font-weight="bold" fill="#7a1008" font-family="Liberation Sans" textLength="9" lengthAdjust="spacingAndGlyphs" stroke="#7a1008" stroke-width="0.9">P</text></svg>
<div class="t" style="left:45.15px;top:292.17px;font-size:7.6px;color:#101010;transform:scaleX(0.9569);">Seitenblock</div>
<div class="a" style="left:26.55px;top:304.88px;width:6.699999999999999px;height:1px;border-top:1px solid #c6c6c6"></div>
<svg style="left:33.25px;top:300.48px" width="9.6" height="9.6" viewBox="0 0 10 10" preserveAspectRatio="none"><text x="0.5" y="9.6" font-size="13" font-weight="bold" fill="#2a0800" font-family="Liberation Sans" textLength="9.5" lengthAdjust="spacingAndGlyphs">D</text><text x="0" y="9" font-size="13" font-weight="bold" fill="#7a1008" font-family="Liberation Sans" textLength="9" lengthAdjust="spacingAndGlyphs" stroke="#7a1008" stroke-width="0.9">D</text></svg>
<div class="t" style="left:45.15px;top:301.77px;font-size:7.6px;color:#101010;transform:scaleX(0.9471);">Direktblock</div>
<div class="a" style="left:26.55px;top:314.475px;width:6.699999999999999px;height:1px;border-top:1px solid #c6c6c6"></div>
<svg style="left:33.25px;top:310.08px" width="9.6" height="9.6" viewBox="0 0 10 10" preserveAspectRatio="none"><text x="0.5" y="9.6" font-size="13" font-weight="bold" fill="#2a0800" font-family="Liberation Sans" textLength="9.5" lengthAdjust="spacingAndGlyphs">S</text><text x="0" y="9" font-size="13" font-weight="bold" fill="#7a1008" font-family="Liberation Sans" textLength="9" lengthAdjust="spacingAndGlyphs" stroke="#7a1008" stroke-width="0.9">S</text></svg>
<div class="t" style="left:45.15px;top:311.36px;font-size:7.6px;color:#101010;transform:scaleX(0.9092);">Bildschirmblock</div>
<div class="a" style="left:26.55px;top:324.07000000000005px;width:6.699999999999999px;height:1px;border-top:1px solid #c6c6c6"></div>
<svg style="left:33.25px;top:319.67px" width="9.6" height="9.6" viewBox="0 0 10 10" preserveAspectRatio="none"><rect x="0" y="0" width="10" height="10" fill="#0a0a38"/><path d="M1 2H9M5 2V10" stroke="#8088c0" stroke-width="2.2"/></svg>
<div class="t" style="left:45.15px;top:320.96px;font-size:7.6px;color:#101010;transform:scaleX(0.9740);">Fensteraufteilung</div>
<div class="a" style="left:26.55px;top:333.66499999999996px;width:6.699999999999999px;height:1px;border-top:1px solid #c6c6c6"></div>
<svg style="left:33.25px;top:329.26px" width="9.6" height="9.6" viewBox="0 0 10 10" preserveAspectRatio="none"><rect x="0" y="0" width="10" height="10" fill="#3840f0"/><rect x="0" y="1.5" width="4" height="3" fill="#c8c8d8"/><text x="0" y="9" font-size="5.5" font-weight="bold" fill="#f01010" font-family="Liberation Sans">16</text></svg>
<div class="t" style="left:45.15px;top:330.55px;font-size:7.6px;color:#101010;transform:scaleX(0.9698);">Externes Zeichen 16</div>
<div class="a" style="left:26.55px;top:343.26px;width:6.699999999999999px;height:1px;border-top:1px solid #c6c6c6"></div>
<svg style="left:33.25px;top:338.86px" width="9.6" height="9.6" viewBox="0 0 10 10" preserveAspectRatio="none"><rect x="0" y="0" width="10" height="10" fill="#3840f0"/><rect x="0" y="1" width="4" height="3" fill="#c8c8d8"/><text x="0" y="9.5" font-size="5.5" font-weight="bold" fill="#f01010" font-family="Liberation Sans">32</text></svg>
<div class="t" style="left:45.15px;top:340.15px;font-size:7.6px;color:#101010;transform:scaleX(0.9698);">Externes Zeichen 32</div>
<div class="a" style="left:26.55px;top:352.855px;width:6.699999999999999px;height:1px;border-top:1px solid #c6c6c6"></div>
<svg style="left:33.25px;top:348.46px" width="9.6" height="9.6" viewBox="0 0 10 10" preserveAspectRatio="none"><path d="M1 8L3 3L5 6L7 2L9 5L6 8L3 7Z" stroke="#222" stroke-width="1" fill="#eee"/><path d="M1 2H5M6 9H9" stroke="#222" stroke-width="0.8"/></svg>
<div class="t" style="left:45.15px;top:349.74px;font-size:7.6px;color:#101010;transform:scaleX(0.9676);">Animation</div>
<div class="a" style="left:26.55px;top:362.45000000000005px;width:6.699999999999999px;height:1px;border-top:1px solid #c6c6c6"></div>
<svg style="left:23.55px;top:359.95px" width="6" height="6" viewBox="0 0 6 6" preserveAspectRatio="none"><rect x="0.5" y="0.5" width="5" height="5" fill="#fff" stroke="#a8a8a8" stroke-width="0.9"/><path d="M1.4 3H4.6" stroke="#333" stroke-width="0.9"/><path d="M3 1.4V4.6" stroke="#333" stroke-width="0.9"/></svg>
<svg style="left:33.25px;top:358.05px" width="9.6" height="9.6" viewBox="0 0 10 10" preserveAspectRatio="none"><ellipse cx="3.5" cy="3" rx="3" ry="2.4" fill="#fff" stroke="#333" stroke-width="0.9"/><rect x="5.5" y="5.5" width="4" height="4" fill="#20a0c0" stroke="#334" stroke-width="0.7"/><path d="M5 5L6 6" stroke="#333" stroke-width="0.8"/></svg>
<div class="t" style="left:45.15px;top:359.34px;font-size:7.6px;color:#101010;transform:scaleX(0.9572);">Kommentar</div>
<div class="a" style="left:6.4px;top:565px;width:48.3px;height:14.7px;background:#c4c4c4;border:1px solid;border-color:transparent #444 #444 #e8e8e8;border-top:none"></div>
<div class="a" style="left:55px;top:566.5px;width:57.5px;height:12px;background:#c4c4c4;border:1px solid;border-color:#555 #444 #444 #555"></div>
<svg style="left:9.30px;top:568.60px" width="10.6" height="9.2" viewBox="0 0 10 10" preserveAspectRatio="none"><rect x="0.5" y="1" width="9" height="8.5" fill="#e6e6e6" stroke="#8a8a8a" stroke-width="1"/><rect x="0" y="0" width="10" height="1.6" fill="#2030f0"/><path d="M0.5 9.5H9.5V1.5" stroke="#555" stroke-width="1" fill="none"/></svg>
<div class="t" style="left:22.90px;top:569.29px;font-size:7.6px;color:#101010;transform:scaleX(0.8103);">Bildschirm</div>
<div class="a" style="left:57.5px;top:568px;width:9.5px;height:9px;background:#000;border:1px solid #7a7a10"></div>
<div class="a" style="left:59.5px;top:570px;width:5.5px;height:4.6px;background:#1a1a00;border:1px solid #6a6a10"></div>
<div class="t" style="left:70.00px;top:568.89px;font-size:7.6px;color:#101010;transform:scaleX(0.8484);">Konfiguration</div>
<div class="a" style="left:200px;top:53px;width:356.5px;height:1px;background:#5a5a5a;"></div>
<div class="a" style="left:200px;top:53px;width:1px;height:528px;background:#5a5a5a;"></div>
<div class="a" style="left:201px;top:54px;width:344px;height:516px;background:#000;overflow:hidden;background-image:radial-gradient(circle at 1px 1px,rgba(120,0,0,.36) 0.6px,transparent 1.1px);background-size:18px 18px;background-position:9.85px -0.4px;"></div>
<div class="a" style="left:201px;top:54px;width:344px;height:35px;background:#ffc822;background-image:radial-gradient(circle at 1px 1px,rgba(240,130,30,.55) 0.6px,transparent 1.1px);background-size:18px 18px;background-position:9.85px -0.4px;"></div>
<div class="a" style="left:201px;top:88.9px;width:344px;height:1.5px;background:#f00;"></div>
<div class="a" style="left:201px;top:521px;width:344px;height:1.3px;background:#f00;"></div>
<div class="a" style="left:201px;top:522.3px;width:344px;height:48px;background:#ffc822;"></div>
<div class="a" style="left:200px;top:90.6px;width:84.3px;height:52.6px;background:#9a9a9e;border:1px solid;border-color:#ececec #e0e0e0 #e0e0e0 #9a9a9e;box-shadow:inset -1px -1px 0 #555"></div>
<div class="a" style="left:202.3px;top:98.3px;width:73.7px;height:35.6px;background:#08be82;border:1px solid;border-color:#c8f0e0 #0a5a40 #0a5a40 #c8f0e0"></div>
<div class="t" style="left:215.00px;top:107.84px;font-size:16px;color:#000;font-family:'Liberation Serif',serif;font-weight:bold;transform:scaleX(1.1498);">Home</div>
<div class="t" style="left:334.20px;top:100.35px;font-size:30.6px;color:#fff;-webkit-text-stroke:0.45px #fff;">Frequenzen</div>
<div class="a" style="left:500px;top:95px;width:45px;height:45px;overflow:hidden">
<div class="t" style="left:9.00px;top:5.35px;font-size:30.6px;color:#fff;transform:scaleX(0.88);-webkit-text-stroke:0.45px #fff;">und Parameter</div>
</div>
<div class="a" style="left:212px;top:181px;width:174px;height:34.5px;background:#08be82;"></div>
<div class="t" style="left:211.20px;top:181.44px;font-size:30.5px;color:#000;font-family:'Liberation Serif',serif;transform:scaleX(1.0212);-webkit-text-stroke:0.35px #000;">Siebmaschine</div>
<div class="a" style="left:396px;top:182px;width:68px;height:32.5px;border:1px dashed #fff"></div>
<div class="t" style="left:399.40px;top:183.36px;font-size:31.2px;color:#fff;transform:scaleX(0.8947);-webkit-text-stroke:0.15px #fff;">1234</div>
<div class="a" style="left:403.5px;top:184px;width:60px;height:29.5px;border:1px dashed #ccc;border-right:none"></div>
<div class="a" style="left:427.5px;top:273px;width:58px;height:33.5px;overflow:hidden"><div class="a" style="left:0.5px;top:4.5px;width:57px;height:28px;background:#0000ff"></div><div class="a" style="left:0px;top:0;width:58px;height:33px;border:1px dashed #fff"></div><div class="a" style="left:0px;top:3.5px;width:58px;height:1px;border-top:1px dashed #ddd"></div><div class="t" style="left:2.2px;top:3.6px;font-size:32.6px;color:#fff;-webkit-text-stroke:0.7px #0000ff;letter-spacing:4.54px;transform:scaleX(0.6)">1234</div></div>
<div class="a" style="left:503px;top:273px;width:42px;height:33.5px;overflow:hidden"><div class="a" style="left:0.5px;top:4.5px;width:57px;height:28px;background:#0000ff"></div><div class="a" style="left:0px;top:0;width:58px;height:33px;border:1px dashed #fff"></div><div class="a" style="left:0px;top:3.5px;width:58px;height:1px;border-top:1px dashed #ddd"></div><div class="t" style="left:2.2px;top:3.6px;font-size:32.6px;color:#fff;-webkit-text-stroke:0.7px #0000ff;letter-spacing:4.54px;transform:scaleX(0.6)">1234</div></div>
<div class="a" style="left:352px;top:324.3px;width:58px;height:33.5px;overflow:hidden"><div class="a" style="left:0.5px;top:4.5px;width:57px;height:28px;background:#0000ff"></div><div class="a" style="left:0px;top:0;width:58px;height:33px;border:1px dashed #fff"></div><div class="a" style="left:0px;top:3.5px;width:58px;height:1px;border-top:1px dashed #ddd"></div><div class="t" style="left:2.2px;top:3.6px;font-size:32.6px;color:#fff;-webkit-text-stroke:0.7px #0000ff;letter-spacing:4.54px;transform:scaleX(0.6)">1234</div></div>
<div class="a" style="left:515px;top:418px;width:30px;height:33.5px;overflow:hidden"><div class="a" style="left:-27.5px;top:4.5px;width:57px;height:28px;background:#0000ff"></div><div class="a" style="left:-28px;top:0;width:58px;height:33px;border:1px dashed #fff"></div><div class="a" style="left:-28px;top:3.5px;width:58px;height:1px;border-top:1px dashed #ddd"></div><div class="t" style="left:-25.8px;top:3.6px;font-size:32.6px;color:#fff;-webkit-text-stroke:0.7px #0000ff;letter-spacing:4.54px;transform:scaleX(0.6)">1234</div></div>
<div class="a" style="left:201px;top:306px;width:344px;height:1px;background:#f00;"></div>
<div class="a" style="left:481px;top:90px;width:1px;height:431px;background:#f00;"></div>
<div class="a" style="left:545px;top:54px;width:11px;height:516px;background:#e2e2e2;"></div>
<div class="a" style="left:545px;top:54px;width:11px;height:10.5px;background:#c4c4c4;border:1px solid;border-color:#f4f4f4 #666 #666 #f4f4f4"></div>
<svg style="left:548.3px;top:58px" width="4" height="2.4" viewBox="0 0 4 2.4"><path d="M2 0L4 2.4H0Z" fill="#111"/></svg>
<div class="a" style="left:545px;top:64.5px;width:11px;height:150px;background:#c4c4c4;border:1px solid;border-color:#f4f4f4 #666 #666 #f4f4f4"></div>
<div class="a" style="left:545px;top:559.5px;width:11px;height:10.5px;background:#c4c4c4;border:1px solid;border-color:#f4f4f4 #666 #666 #f4f4f4"></div>
<svg style="left:548.3px;top:563.6px" width="4" height="2.4" viewBox="0 0 4 2.4"><path d="M0 0H4L2 2.4Z" fill="#111"/></svg>
<div class="a" style="left:201px;top:570px;width:344px;height:10.5px;background:#e2e2e2;"></div>
<div class="a" style="left:201px;top:570px;width:10.5px;height:10.5px;background:#c4c4c4;border:1px solid;border-color:#f4f4f4 #666 #666 #f4f4f4"></div>
<svg style="left:204px;top:573px" width="4" height="5"><path d="M3.5 0 L3.5 5 L0.5 2.5Z" fill="#111"/></svg>
<div class="a" style="left:220px;top:570px;width:60.5px;height:10.5px;background:#c4c4c4;border:1px solid;border-color:#f4f4f4 #666 #666 #f4f4f4"></div>
<div class="a" style="left:534.5px;top:570px;width:10.5px;height:10.5px;background:#c4c4c4;border:1px solid;border-color:#f4f4f4 #666 #666 #f4f4f4"></div>
<svg style="left:538px;top:573px" width="4" height="5"><path d="M0.5 0 L0.5 5 L3.5 2.5Z" fill="#111"/></svg>
<div class="a" style="left:545px;top:570px;width:11px;height:10.5px;background:#c4c4c4;"></div>
<div class="a" style="left:556px;top:54px;width:153px;height:528px;background:#c4c4c4;"></div>
<div class="a" style="left:556px;top:54px;width:1.2px;height:527px;background:#f2f2f2;"></div>
<div class="a" style="left:557px;top:54.2px;width:86px;height:1px;background:#ececec;"></div>
<div class="a" style="left:561px;top:59px;width:71px;height:2.4px;background:#dadada;"></div>
<div class="a" style="left:561px;top:63px;width:71px;height:1px;background:#b2b2b2;"></div>
<svg style="left:635.60px;top:57.30px" width="3.2" height="3.2" viewBox="0 0 4 4" preserveAspectRatio="none"><path d="M0.3 0.3L3.7 3.7M3.7 0.3L0.3 3.7" stroke="#000" stroke-width="1.1"/></svg>
<div class="a" style="left:561px;top:66px;width:74.6px;height:502px;border:1px solid;border-color:#ececec #505050 #505050 #ececec"></div>
<div class="a" style="left:564.2px;top:69.2px;width:69px;height:484.3px;background:#fff;border:1px solid;border-color:#4a4a4a #505050 #505050 #4a4a4a"></div>
<div class="a" style="left:565.2px;top:70.2px;width:67.1px;height:472px;overflow:hidden">
<div class="a" style="left:6.5px;top:4.5px;width:1px;height:134.26px;border-left:1px solid #c6c6c6"></div>
<div class="a" style="left:7.0px;top:4.0px;width:6.2999999999999545px;height:1px;border-top:1px solid #c6c6c6"></div>
<svg style="left:13.10px;top:-0.40px" width="9.6" height="9.6" viewBox="0 0 10 10" preserveAspectRatio="none"><rect x="0" y="0" width="10" height="10" fill="#000"/><rect x="2" y="0" width="5" height="1.5" fill="#2030e0"/><circle cx="3.2" cy="4" r="1.4" fill="#f0e020"/><circle cx="6.8" cy="6.5" r="1.5" fill="#e020d0"/><circle cx="2.5" cy="7.8" r="1.2" fill="#20c040"/></svg>
<div class="t" style="left:25.60px;top:0.89px;font-size:7.6px;color:#101010;transform:scaleX(0.94);">Teile-Liste</div>
<div class="a" style="left:7.0px;top:13.590000000000003px;width:6.2999999999999545px;height:1px;border-top:1px solid #c6c6c6"></div>
<svg style="left:4.00px;top:11.09px" width="6" height="6" viewBox="0 0 6 6" preserveAspectRatio="none"><rect x="0.5" y="0.5" width="5" height="5" fill="#fff" stroke="#a8a8a8" stroke-width="0.9"/><path d="M1.4 3H4.6" stroke="#333" stroke-width="0.9"/><path d="M3 1.4V4.6" stroke="#333" stroke-width="0.9"/></svg>
<svg style="left:13.10px;top:9.19px" width="9.6" height="9.6" viewBox="0 0 10 10" preserveAspectRatio="none"><rect x="0.5" y="0.8" width="7" height="6" fill="#e8f0f0" stroke="#355" stroke-width="1"/><rect x="0.5" y="0.5" width="7" height="1.5" fill="#207070"/><rect x="3" y="3.5" width="6.5" height="6" fill="#ddd" stroke="#444" stroke-width="1"/></svg>
<div class="t" style="left:25.60px;top:10.48px;font-size:7.6px;color:#101010;transform:scaleX(0.94);">Überlappung</div>
<div class="a" style="left:7.0px;top:23.179999999999993px;width:6.2999999999999545px;height:1px;border-top:1px solid #c6c6c6"></div>
<svg style="left:13.10px;top:18.78px" width="9.6" height="9.6" viewBox="0 0 10 10" preserveAspectRatio="none"><path d="M6 0L8 0.8L6.5 2.5" fill="#f0e040"/><path d="M2 6Q5 1 8 6Z" fill="#2030d0"/><rect x="0.5" y="6" width="9" height="2" fill="#445"/><rect x="1.5" y="8" width="7" height="1.5" fill="#888"/></svg>
<div class="t" style="left:25.60px;top:20.07px;font-size:7.6px;color:#101010;transform:scaleX(0.94);">Schalter</div>
<div class="a" style="left:7.0px;top:32.769999999999996px;width:6.2999999999999545px;height:1px;border-top:1px solid #c6c6c6"></div>
<svg style="left:13.10px;top:28.37px" width="9.6" height="9.6" viewBox="0 0 10 10" preserveAspectRatio="none"><path d="M1.5 6Q2 1.5 5 2.5Q8 1.5 8.5 6Z" fill="#f01818"/><rect x="0.5" y="6" width="9" height="2" fill="#555"/><rect x="1.5" y="8" width="7" height="1.5" fill="#999"/></svg>
<div class="t" style="left:25.60px;top:29.66px;font-size:7.6px;color:#101010;transform:scaleX(0.94);">Lampe</div>
<div class="a" style="left:7.0px;top:42.36px;width:6.2999999999999545px;height:1px;border-top:1px solid #c6c6c6"></div>
<svg style="left:4.00px;top:39.86px" width="6" height="6" viewBox="0 0 6 6" preserveAspectRatio="none"><rect x="0.5" y="0.5" width="5" height="5" fill="#fff" stroke="#a8a8a8" stroke-width="0.9"/><path d="M1.4 3H4.6" stroke="#333" stroke-width="0.9"/><path d="M3 1.4V4.6" stroke="#333" stroke-width="0.9"/></svg>
<svg style="left:13.10px;top:37.96px" width="9.6" height="9.6" viewBox="0 0 10 10" preserveAspectRatio="none"><rect x="0.5" y="0.5" width="9" height="9" fill="#d8d8d8" stroke="#555" stroke-width="1"/><path d="M2 3V5.5M4 3V5.5M5.5 3V5.5M7.5 3V5.5M3 5.5H7" stroke="#333" stroke-width="0.9"/><path d="M1 7.5H9" stroke="#777" stroke-width="1"/></svg>
<div class="t" style="left:25.60px;top:39.25px;font-size:7.6px;color:#101010;transform:scaleX(0.94);">Datenanzeige</div>
<div class="a" style="left:7.0px;top:51.95px;width:6.2999999999999545px;height:1px;border-top:1px solid #c6c6c6"></div>
<svg style="left:4.00px;top:49.45px" width="6" height="6" viewBox="0 0 6 6" preserveAspectRatio="none"><rect x="0.5" y="0.5" width="5" height="5" fill="#fff" stroke="#a8a8a8" stroke-width="0.9"/><path d="M1.4 3H4.6" stroke="#333" stroke-width="0.9"/><path d="M3 1.4V4.6" stroke="#333" stroke-width="0.9"/></svg>
<svg style="left:13.10px;top:47.55px" width="9.6" height="9.6" viewBox="0 0 10 10" preserveAspectRatio="none"><path d="M1.5 0.5H8.5Q9.5 0.5 9.5 1.5V5.5Q9.5 6.5 8.5 6.5H6L5.5 9.5L3.5 6.5H1.5Q0.5 6.5 0.5 5.5V1.5Q0.5 0.5 1.5 0.5Z" fill="#f0f0f0" stroke="#666" stroke-width="0.9"/><path d="M2.5 3H7.5" stroke="#bbb" stroke-width="1"/></svg>
<div class="t" style="left:25.60px;top:48.84px;font-size:7.6px;color:#101010;transform:scaleX(0.94);">Meldung</div>
<div class="a" style="left:7.0px;top:61.540000000000006px;width:6.2999999999999545px;height:1px;border-top:1px solid #c6c6c6"></div>
<svg style="left:13.10px;top:57.14px" width="9.6" height="9.6" viewBox="0 0 10 10" preserveAspectRatio="none"><rect x="1.5" y="0.3" width="7" height="9.4" fill="#2838e0" stroke="#1a1a90" stroke-width="0.6"/><rect x="3" y="1.5" width="4" height="2" fill="#c8d0ff"/><path d="M3 5.5H7M3 7.5H7" stroke="#aab" stroke-width="0.9"/></svg>
<div class="t" style="left:25.60px;top:58.43px;font-size:7.6px;color:#101010;transform:scaleX(0.94);">Eingabe</div>
<div class="a" style="left:7.0px;top:71.12999999999998px;width:6.2999999999999545px;height:1px;border-top:1px solid #c6c6c6"></div>
<svg style="left:4.00px;top:68.63px" width="6" height="6" viewBox="0 0 6 6" preserveAspectRatio="none"><rect x="0.5" y="0.5" width="5" height="5" fill="#fff" stroke="#a8a8a8" stroke-width="0.9"/><path d="M1.4 3H4.6" stroke="#333" stroke-width="0.9"/><path d="M3 1.4V4.6" stroke="#333" stroke-width="0.9"/></svg>
<svg style="left:13.10px;top:66.73px" width="9.6" height="9.6" viewBox="0 0 10 10" preserveAspectRatio="none"><rect x="0.5" y="0.5" width="9" height="9" fill="#e8e8e8" stroke="#777" stroke-width="1"/><rect x="2" y="1" width="6" height="2" fill="#f050d0"/><rect x="2" y="3" width="6" height="2" fill="#40d060"/><rect x="2" y="5" width="6" height="2" fill="#f04040"/><rect x="2" y="7" width="6" height="2" fill="#3050e0"/></svg>
<div class="t" style="left:25.60px;top:68.02px;font-size:7.6px;color:#101010;transform:scaleX(0.94);">Diagramm</div>
<div class="a" style="left:7.0px;top:80.72000000000001px;width:6.2999999999999545px;height:1px;border-top:1px solid #c6c6c6"></div>
<svg style="left:4.00px;top:78.22px" width="6" height="6" viewBox="0 0 6 6" preserveAspectRatio="none"><rect x="0.5" y="0.5" width="5" height="5" fill="#fff" stroke="#a8a8a8" stroke-width="0.9"/><path d="M1.4 3H4.6" stroke="#333" stroke-width="0.9"/><path d="M3 1.4V4.6" stroke="#333" stroke-width="0.9"/></svg>
<svg style="left:13.10px;top:76.32px" width="9.6" height="9.6" viewBox="0 0 10 10" preserveAspectRatio="none"><rect x="0.5" y="0.5" width="9" height="9" fill="#c8c8d0" stroke="#777" stroke-width="1"/><path d="M1.5 6L4 3L6 5.5L8.5 2" stroke="#e02060" stroke-width="1.2" fill="none"/><path d="M1.5 4L4 7L6 4L8.5 7" stroke="#2080e0" stroke-width="1.1" fill="none"/><path d="M1.5 8H8" stroke="#30a030" stroke-width="1"/></svg>
<div class="t" style="left:25.60px;top:77.61px;font-size:7.6px;color:#101010;transform:scaleX(0.94);">Trenddiagramm</div>
<div class="a" style="left:7.0px;top:90.30999999999999px;width:6.2999999999999545px;height:1px;border-top:1px solid #c6c6c6"></div>
<svg style="left:4.00px;top:87.81px" width="6" height="6" viewBox="0 0 6 6" preserveAspectRatio="none"><rect x="0.5" y="0.5" width="5" height="5" fill="#fff" stroke="#a8a8a8" stroke-width="0.9"/><path d="M1.4 3H4.6" stroke="#333" stroke-width="0.9"/><path d="M3 1.4V4.6" stroke="#333" stroke-width="0.9"/></svg>
<svg style="left:13.10px;top:85.91px" width="9.6" height="9.6" viewBox="0 0 10 10" preserveAspectRatio="none"><path d="M1.5 8V5Q1.5 0.8 5 0.8Q8.5 0.8 8.5 5V8Z" fill="#f4f000" stroke="#a0a000" stroke-width="0.5"/><rect x="0.5" y="8" width="9" height="1.8" fill="#333"/></svg>
<div class="t" style="left:25.60px;top:87.20px;font-size:7.6px;color:#101010;transform:scaleX(0.94);">Alarm</div>
<div class="a" style="left:7.0px;top:99.90000000000002px;width:6.2999999999999545px;height:1px;border-top:1px solid #c6c6c6"></div>
<svg style="left:4.00px;top:97.40px" width="6" height="6" viewBox="0 0 6 6" preserveAspectRatio="none"><rect x="0.5" y="0.5" width="5" height="5" fill="#fff" stroke="#a8a8a8" stroke-width="0.9"/><path d="M1.4 3H4.6" stroke="#333" stroke-width="0.9"/><path d="M3 1.4V4.6" stroke="#333" stroke-width="0.9"/></svg>
<svg style="left:13.10px;top:95.50px" width="9.6" height="9.6" viewBox="0 0 10 10" preserveAspectRatio="none"><rect x="0.3" y="0.3" width="9.4" height="9.4" fill="#30a8b8" stroke="#334" stroke-width="0.6"/><path d="M0.5 6L3 4L5 6L7.5 3.5L9.5 5.5V9.5H0.5Z" fill="#208030"/><path d="M2 2.5H6" stroke="#e8f8ff" stroke-width="1.2"/></svg>
<div class="t" style="left:25.60px;top:96.79px;font-size:7.6px;color:#101010;transform:scaleX(0.94);">Abbildung</div>
<div class="a" style="left:7.0px;top:109.49px;width:6.2999999999999545px;height:1px;border-top:1px solid #c6c6c6"></div>
<svg style="left:4.00px;top:106.99px" width="6" height="6" viewBox="0 0 6 6" preserveAspectRatio="none"><rect x="0.5" y="0.5" width="5" height="5" fill="#fff" stroke="#a8a8a8" stroke-width="0.9"/><path d="M1.4 3H4.6" stroke="#333" stroke-width="0.9"/><path d="M3 1.4V4.6" stroke="#333" stroke-width="0.9"/></svg>
<svg style="left:13.10px;top:105.09px" width="9.6" height="9.6" viewBox="0 0 10 10" preserveAspectRatio="none"><path d="M1.5 9.5V1L5 5L8.5 1V9.5" stroke="#e01818" stroke-width="2.3" fill="none"/></svg>
<div class="t" style="left:25.60px;top:106.38px;font-size:7.6px;color:#101010;transform:scaleX(0.94);">Makro</div>
<div class="a" style="left:7.0px;top:119.08px;width:6.2999999999999545px;height:1px;border-top:1px solid #c6c6c6"></div>
<svg style="left:4.00px;top:116.58px" width="6" height="6" viewBox="0 0 6 6" preserveAspectRatio="none"><rect x="0.5" y="0.5" width="5" height="5" fill="#fff" stroke="#a8a8a8" stroke-width="0.9"/><path d="M1.4 3H4.6" stroke="#333" stroke-width="0.9"/><path d="M3 1.4V4.6" stroke="#333" stroke-width="0.9"/></svg>
<svg style="left:13.10px;top:114.68px" width="9.6" height="9.6" viewBox="0 0 10 10" preserveAspectRatio="none"><rect x="0.8" y="1.5" width="8.4" height="7" rx="1.2" fill="#ddd" stroke="#333" stroke-width="1"/><path d="M2.5 0.5V2.5M5 0.5V2.5M7.5 0.5V2.5" stroke="#222" stroke-width="1"/><path d="M2.5 5H4.5V7M5.5 5V7H7.5" stroke="#333" stroke-width="0.9" fill="none"/></svg>
<div class="t" style="left:25.60px;top:115.97px;font-size:7.6px;color:#101010;transform:scaleX(0.94);">Kalender</div>
<div class="a" style="left:7.0px;top:128.67000000000002px;width:6.2999999999999545px;height:1px;border-top:1px solid #c6c6c6"></div>
<svg style="left:13.10px;top:124.27px" width="9.6" height="9.6" viewBox="0 0 10 10" preserveAspectRatio="none"><path d="M3.5 0.5L5 3L7 0.5" stroke="#333" stroke-width="1" fill="none"/><rect x="1.5" y="3.5" width="7" height="6" fill="#e8e8e8" stroke="#555" stroke-width="0.9"/><rect x="3.5" y="5" width="3" height="3" fill="#e02020"/></svg>
<div class="t" style="left:25.60px;top:125.56px;font-size:7.6px;color:#101010;transform:scaleX(0.94);">Rezept</div>
<div class="a" style="left:7.0px;top:138.26px;width:6.2999999999999545px;height:1px;border-top:1px solid #c6c6c6"></div>
<svg style="left:4.00px;top:135.76px" width="6" height="6" viewBox="0 0 6 6" preserveAspectRatio="none"><rect x="0.5" y="0.5" width="5" height="5" fill="#fff" stroke="#a8a8a8" stroke-width="0.9"/><path d="M1.4 3H4.6" stroke="#333" stroke-width="0.9"/><path d="M3 1.4V4.6" stroke="#333" stroke-width="0.9"/></svg>
<svg style="left:13.10px;top:133.86px" width="9.6" height="9.6" viewBox="0 0 10 10" preserveAspectRatio="none"><rect x="0.5" y="0.5" width="9" height="9" fill="#889" stroke="#555" stroke-width="1"/><circle cx="3.8" cy="4" r="2" fill="#e01818"/><circle cx="6.2" cy="4.5" r="2" fill="#20c040"/><circle cx="5" cy="6.5" r="2" fill="#2030e0"/></svg>
<div class="t" style="left:25.60px;top:135.15px;font-size:7.6px;color:#101010;transform:scaleX(0.94);">Andere</div>
</div>
<div class="a" style="left:565.2px;top:542px;width:67.1px;height:10.5px;background:#e2e2e2;"></div>
<div class="a" style="left:565.2px;top:542px;width:10px;height:10.5px;background:#c4c4c4;border:1px solid;border-color:#f4f4f4 #666 #666 #f4f4f4"></div>
<svg style="left:567px;top:545px" width="4" height="5"><path d="M3.5 0 L3.5 5 L0.5 2.5Z" fill="#111"/></svg>
<div class="a" style="left:574.5px;top:542px;width:39px;height:10.5px;background:#c4c4c4;border:1px solid;border-color:#f4f4f4 #666 #666 #f4f4f4"></div>
<div class="a" style="left:621.8px;top:542px;width:10.5px;height:10.5px;background:#c4c4c4;border:1px solid;border-color:#f4f4f4 #666 #666 #f4f4f4"></div>
<svg style="left:625px;top:545px" width="4" height="5"><path d="M0.5 0 L0.5 5 L3.5 2.5Z" fill="#111"/></svg>
<svg style="left:584.90px;top:557.00px" width="9.3" height="9" viewBox="0 0 10 10" preserveAspectRatio="none"><rect x="0" y="0" width="4.7" height="4.7" rx="1.2" fill="#e81818"/><rect x="5.3" y="0" width="4.7" height="4.7" rx="1.2" fill="#1838e0"/><rect x="0" y="5.3" width="4.7" height="4.7" rx="1.2" fill="#f0e818"/><rect x="5.3" y="5.3" width="4.7" height="4.7" rx="1.2" fill="#18c030"/></svg>
<div class="t" style="left:599.00px;top:558.49px;font-size:7.6px;color:#101010;transform:scaleX(0.8317);">Teile</div>
<div class="a" style="left:564.2px;top:568.2px;width:69.2px;height:10.3px;background:#c4c4c4;border:1px solid;border-color:#e8e8e8 #505050 #505050 #e8e8e8;border-bottom-width:1.5px"></div>
<svg style="left:582.00px;top:567.60px" width="10" height="9.6" viewBox="0 0 10 10" preserveAspectRatio="none"><rect x="0" y="0" width="10" height="10" fill="#1a1a90"/><path d="M0.5 9.5L7 3" stroke="#e02020" stroke-width="1.3"/><circle cx="7.2" cy="6.8" r="0.8" fill="#f0e020"/><circle cx="4" cy="2.2" r="0.8" fill="#f0e020"/><circle cx="7.6" cy="2.4" r="0.9" fill="#f0e020"/><circle cx="5.4" cy="5" r="0.6" fill="#f0e020"/></svg>
<div class="t" style="left:595.20px;top:568.69px;font-size:7.6px;color:#101010;transform:scaleX(0.8543);">Wizard</div>
<div class="a" style="left:641px;top:54px;width:1px;height:527px;background:#9a9a9a;"></div>
<div class="a" style="left:643px;top:54px;width:1px;height:527px;background:#f4f4f4;"></div>
<div class="a" style="left:644px;top:54px;width:65px;height:1px;background:#f4f4f4;"></div>
<div class="a" style="left:648px;top:59.6px;width:61px;height:2.2px;background:#dadada;"></div>
<div class="a" style="left:648px;top:66.3px;width:10px;height:9.6px;background:#bcbcbc;border:1px solid #585858"></div>
<svg style="left:649.00px;top:67.30px" width="8" height="7.6" viewBox="0 0 10 10" preserveAspectRatio="none"><circle cx="5" cy="5" r="3.2" fill="none" stroke="#30b050" stroke-width="2"/><path d="M5 0V10M0 5H10" stroke="#c8c8c8" stroke-width="1.2"/></svg>
<div class="a" style="left:664px;top:66.3px;width:10px;height:9.6px;background:#bcbcbc;border:1px solid #585858"></div>
<svg style="left:665.00px;top:67.30px" width="8" height="7.6" viewBox="0 0 10 10" preserveAspectRatio="none"><path d="M1 7L3.5 2L6 7Z" fill="#f0e020" stroke="#554" stroke-width="0.6"/><circle cx="6.5" cy="6.5" r="2.2" fill="#20d8e8"/><circle cx="6" cy="6" r="0.8" fill="#fff"/></svg>
<div class="a" style="left:676.2px;top:66.3px;width:10px;height:9.6px;background:#bcbcbc;border:1px solid #585858"></div>
<svg style="left:677.20px;top:67.30px" width="8" height="7.6" viewBox="0 0 10 10" preserveAspectRatio="none"><path d="M3.5 7.5L6.5 1.5L9.5 7.5Z" fill="#f0e020" stroke="#554" stroke-width="0.6"/><path d="M0.5 8L3.5 4M0.5 8L3 8.5" stroke="#e01818" stroke-width="1.3"/><path d="M6.5 3.5V6" stroke="#333" stroke-width="0.8"/></svg>
<div class="a" style="left:649px;top:79px;width:62px;height:493px;background:#c1c1c1;border:1px solid;border-color:#6a6a6a #e8e8e8 #e8e8e8 #6a6a6a;box-shadow:inset 1px 1px 0 #8a8a8a"></div>
<div class="t" style="left:651.60px;top:80.67px;font-size:6px;color:#1c1c1c;transform:scaleX(0.9889);">W</div>
<div class="t" style="left:659.00px;top:80.67px;font-size:6px;color:#1c1c1c;transform:scaleX(0.9260);">Bildschirm[1]</div>
<div class="t" style="left:693.30px;top:80.67px;font-size:6px;color:#1c1c1c;transform:scaleX(0.9);">Schalter</div>
<div class="t" style="left:651.60px;top:87.87px;font-size:6px;color:#1c1c1c;transform:scaleX(0.9889);">W</div>
<div class="t" style="left:659.00px;top:87.87px;font-size:6px;color:#1c1c1c;transform:scaleX(0.9260);">Bildschirm[1]</div>
<div class="t" style="left:693.30px;top:87.87px;font-size:6px;color:#1c1c1c;transform:scaleX(0.9);">Schalter</div>
<div class="t" style="left:651.60px;top:95.07px;font-size:6px;color:#1c1c1c;transform:scaleX(0.9889);">W</div>
<div class="t" style="left:659.00px;top:95.07px;font-size:6px;color:#1c1c1c;transform:scaleX(0.9260);">Bildschirm[1]</div>
<div class="t" style="left:693.30px;top:95.07px;font-size:6px;color:#1c1c1c;transform:scaleX(0.9);">Schalter</div>
<div class="t" style="left:651.60px;top:102.27px;font-size:6px;color:#1c1c1c;transform:scaleX(0.9889);">W</div>
<div class="t" style="left:659.00px;top:102.27px;font-size:6px;color:#1c1c1c;transform:scaleX(0.9260);">Bildschirm[1]</div>
<div class="t" style="left:693.30px;top:102.27px;font-size:6px;color:#1c1c1c;transform:scaleX(0.9);">Schalter</div>
<div class="t" style="left:651.60px;top:109.47px;font-size:6px;color:#1c1c1c;transform:scaleX(0.9889);">W</div>
<div class="t" style="left:659.00px;top:109.47px;font-size:6px;color:#1c1c1c;transform:scaleX(0.9260);">Bildschirm[1]</div>
<div class="t" style="left:693.30px;top:109.47px;font-size:6px;color:#1c1c1c;transform:scaleX(0.9);">Schalter</div>
<div class="t" style="left:651.60px;top:116.67px;font-size:6px;color:#1c1c1c;transform:scaleX(0.9889);">W</div>
<div class="t" style="left:659.00px;top:116.67px;font-size:6px;color:#1c1c1c;transform:scaleX(0.9260);">Bildschirm[1]</div>
<div class="t" style="left:693.30px;top:116.67px;font-size:6px;color:#1c1c1c;transform:scaleX(0.9);">Schalter</div>
<div class="t" style="left:651.60px;top:123.87px;font-size:6px;color:#1c1c1c;transform:scaleX(0.9889);">W</div>
<div class="t" style="left:659.00px;top:123.87px;font-size:6px;color:#1c1c1c;transform:scaleX(0.9260);">Bildschirm[1]</div>
<div class="t" style="left:693.30px;top:123.87px;font-size:6px;color:#1c1c1c;transform:scaleX(0.9);">Schalter</div>
<div class="t" style="left:651.60px;top:131.07px;font-size:6px;color:#1c1c1c;transform:scaleX(0.9889);">W</div>
<div class="t" style="left:659.00px;top:131.07px;font-size:6px;color:#1c1c1c;transform:scaleX(0.9260);">Bildschirm[1]</div>
<div class="t" style="left:693.30px;top:131.07px;font-size:6px;color:#1c1c1c;transform:scaleX(0.9);">Schalter</div>
<div class="a" style="left:650px;top:572px;width:59px;height:9.5px;background:#e2e2e2;"></div>
<div class="a" style="left:650px;top:572px;width:10px;height:9.5px;background:#c4c4c4;border:1px solid;border-color:#f4f4f4 #666 #666 #f4f4f4"></div>
<svg style="left:653.5px;top:574.5px" width="3.4" height="4.6" viewBox="0 0 4 5"><path d="M3.5 0 L3.5 5 L0.5 2.5Z" fill="#8e8e8e"/></svg>
<div class="a" style="left:214px;top:372.5px;width:301px;height:193px;background:#c4c4c4;border:1px solid;border-color:#e8e8e8 #444 #444 #e8e8e8;box-shadow:inset 1px 1px 0 #fafafa, inset -1px -1px 0 #868686"></div>
<div class="a" style="left:216px;top:374.5px;width:297px;height:11px;background:linear-gradient(90deg,#8a0018 0%,#70000f 35%,#300006 70%,#0c0002 100%);"></div>
<div class="t" style="left:217.50px;top:376.09px;font-size:8px;color:#fff;font-weight:bold;transform:scaleX(0.8809);">Simulator</div>
<div class="a" style="left:503px;top:375.5px;width:9px;height:9px;background:#c4c4c4;border:1px solid;border-color:#f4f4f4 #333 #333 #f4f4f4"></div>
<svg style="left:505.00px;top:377.50px" width="5" height="5" viewBox="0 0 5 5" preserveAspectRatio="none"><path d="M0.5 0.5L4.5 4.5M4.5 0.5L0.5 4.5" stroke="#000" stroke-width="1.2"/></svg>
<div class="a" style="left:223.5px;top:392.5px;width:13.3px;height:12.8px;background:#c4c4c4;border:1px solid;border-color:#f4f4f4 #606060 #606060 #f4f4f4"></div>
<svg style="left:225.50px;top:394.30px" width="9.3" height="9.200000000000001" viewBox="0 0 10 10" preserveAspectRatio="none"><rect x="0.5" y="1" width="9" height="6.5" fill="#20a8b8" stroke="#223" stroke-width="1"/><rect x="1.5" y="2" width="7" height="2" fill="#e8f4ff"/><path d="M5 3V9M2.5 6.5L5 9.5L7.5 6.5Z" stroke="#e01010" stroke-width="1.6" fill="#e01010"/></svg>
<div class="a" style="left:236.8px;top:392.5px;width:13.7px;height:12.8px;background:#c4c4c4;border:1px solid;border-color:#f4f4f4 #606060 #606060 #f4f4f4"></div>
<svg style="left:238.80px;top:394.30px" width="9.7" height="9.200000000000001" viewBox="0 0 10 10" preserveAspectRatio="none"><path d="M0.5 3H3.5L4.5 4H8.5V9.5H0.5Z" fill="#e8e020" stroke="#333" stroke-width="0.8"/><path d="M0.5 9.5L2.5 5.5H10L8.5 9.5Z" fill="#f0e828" stroke="#333" stroke-width="0.8"/><path d="M5 1.5Q7 0 9 2" stroke="#222" stroke-width="0.8" fill="none"/></svg>
<div class="a" style="left:250.5px;top:392.5px;width:14.3px;height:12.8px;background:#c4c4c4;border:1px solid;border-color:#f4f4f4 #606060 #606060 #f4f4f4"></div>
<svg style="left:252.50px;top:394.30px" width="10.3" height="9.200000000000001" viewBox="0 0 10 10" preserveAspectRatio="none"><rect x="1" y="0.8" width="8" height="8.6" fill="none" stroke="#9a9a9a" stroke-width="1.2"/><rect x="3" y="1" width="4" height="3" fill="#9a9a9a"/><path d="M2.5 6H7.5" stroke="#9a9a9a" stroke-width="1"/></svg>
<div class="a" style="left:269.3px;top:392.5px;width:13.3px;height:12.8px;background:#c4c4c4;border:1px solid;border-color:#f4f4f4 #606060 #606060 #f4f4f4"></div>
<svg style="left:271.30px;top:394.30px" width="9.3" height="9.200000000000001" viewBox="0 0 10 10" preserveAspectRatio="none"><circle cx="2.8" cy="7.5" r="1.8" fill="none" stroke="#9a9a9a" stroke-width="1.2"/><circle cx="7.2" cy="7.5" r="1.8" fill="none" stroke="#9a9a9a" stroke-width="1.2"/><path d="M3 0.5L7 6M7 0.5L3 6" stroke="#9a9a9a" stroke-width="1.1"/></svg>
<div class="a" style="left:282.6px;top:392.5px;width:14px;height:12.8px;background:#c4c4c4;border:1px solid;border-color:#f4f4f4 #606060 #606060 #f4f4f4"></div>
<svg style="left:284.60px;top:394.30px" width="10" height="9.200000000000001" viewBox="0 0 10 10" preserveAspectRatio="none"><rect x="0.8" y="0.8" width="5" height="6" fill="none" stroke="#9a9a9a" stroke-width="1.1"/><rect x="4" y="3.2" width="5" height="6" fill="#c6c6c6" stroke="#9a9a9a" stroke-width="1.1"/></svg>
<div class="a" style="left:296.6px;top:392.5px;width:14px;height:12.8px;background:#c4c4c4;border:1px solid;border-color:#f4f4f4 #606060 #606060 #f4f4f4"></div>
<svg style="left:298.60px;top:394.30px" width="10" height="9.200000000000001" viewBox="0 0 10 10" preserveAspectRatio="none"><rect x="1" y="1" width="7" height="7.5" fill="#9a9a9a"/><rect x="5" y="4.5" width="4" height="5" fill="#d8d8d8" stroke="#9a9a9a" stroke-width="0.8"/></svg>
<div class="a" style="left:315px;top:392.5px;width:13.5px;height:12.8px;background:#c4c4c4;border:1px solid;border-color:#f4f4f4 #606060 #606060 #f4f4f4"></div>
<svg style="left:317.00px;top:394.30px" width="9.5" height="9.200000000000001" viewBox="0 0 10 10" preserveAspectRatio="none"><path d="M2 7.5H6.5Q8.5 7.5 8.5 5.5Q8.5 3.5 6.5 3.5H3" stroke="#9a9a9a" stroke-width="1.3" fill="none"/><path d="M4.2 1.3L1.2 3.5L4.2 5.7" fill="#9a9a9a"/></svg>
<div class="a" style="left:328.5px;top:392.5px;width:14.2px;height:12.8px;background:#c4c4c4;border:1px solid;border-color:#f4f4f4 #606060 #606060 #f4f4f4"></div>
<svg style="left:330.50px;top:394.30px" width="10.2" height="9.200000000000001" viewBox="0 0 10 10" preserveAspectRatio="none"><path d="M8 7.5H3.5Q1.5 7.5 1.5 5.5Q1.5 3.5 3.5 3.5H7" stroke="#9a9a9a" stroke-width="1.3" fill="none"/><path d="M5.8 1.3L8.8 3.5L5.8 5.7" fill="#9a9a9a"/></svg>
<div class="a" style="left:347.6px;top:392.5px;width:14px;height:12.8px;background:#c4c4c4;border:1px solid;border-color:#f4f4f4 #606060 #606060 #f4f4f4"></div>
<svg style="left:349.60px;top:394.30px" width="10" height="9.200000000000001" viewBox="0 0 10 10" preserveAspectRatio="none"><path d="M8.5 0.5V9.5L1 5Z" fill="#000"/></svg>
<div class="a" style="left:361.6px;top:392.5px;width:14px;height:12.8px;background:#c4c4c4;border:1px solid;border-color:#f4f4f4 #606060 #606060 #f4f4f4"></div>
<svg style="left:363.60px;top:394.30px" width="10" height="9.200000000000001" viewBox="0 0 10 10" preserveAspectRatio="none"><path d="M1.5 0.5V9.5L9 5Z" fill="#000"/></svg>
<div class="a" style="left:380px;top:392.8px;width:94.8px;height:12.5px;background:#fff;border:1px solid;border-color:#6a6a6a #f0f0f0 #f0f0f0 #6a6a6a;box-shadow:inset 1px 1px 0 #444"></div>
<div class="t" style="left:388.20px;top:395.68px;font-size:7.2px;color:#101010;transform:scaleX(0.7661);">2:</div>
<div class="t" style="left:404.00px;top:395.68px;font-size:7.2px;color:#101010;transform:scaleX(0.8770);">Frequenzen</div>
<div class="a" style="left:464px;top:394.3px;width:9.8px;height:10px;background:#c4c4c4;border:1px solid;border-color:#e8e8e8 #555 #555 #e8e8e8"></div>
<svg style="left:467.60px;top:398.20px" width="3.2" height="2" viewBox="0 0 4 2.4" preserveAspectRatio="none"><path d="M0 0H4L2 2.4Z" fill="#000"/></svg>
<div class="a" style="left:480.9px;top:392.5px;width:12.8px;height:12.8px;background:#dcdcdc;border:1px solid;border-color:#6a6a6a #f0f0f0 #f0f0f0 #6a6a6a"></div>
<svg style="left:482.50px;top:394.20px" width="9.6" height="9.6" viewBox="0 0 10 10" preserveAspectRatio="none"><circle cx="5" cy="5" r="4.2" fill="#f4f8ff" stroke="#18a8a0" stroke-width="1"/><circle cx="5" cy="5" r="3.3" fill="none" stroke="#3048c0" stroke-width="0.5"/><text x="1.9" y="6.5" font-size="4" font-weight="bold" font-family="Liberation Sans" fill="#1828a8" textLength="6.2" lengthAdjust="spacingAndGlyphs">REL</text></svg>
<div class="a" style="left:494.6px;top:404.3px;width:12px;height:1px;background:#555;"></div>
<svg style="left:495.60px;top:393.80px" width="9.8" height="9.8" viewBox="0 0 10 10" preserveAspectRatio="none"><circle cx="5" cy="5" r="4.2" fill="#f4f8ff" stroke="#18a8a0" stroke-width="1"/><circle cx="5" cy="5" r="3.3" fill="none" stroke="#3048c0" stroke-width="0.5"/><text x="2.1" y="7.3" font-size="6.4" font-weight="bold" font-style="italic" font-family="Liberation Sans" fill="#2030b0">W</text></svg>
<div class="a" style="left:221.6px;top:410.2px;width:285.9px;height:121.50000000000006px;background:#fff;border:1px solid;border-color:#5a5a5a #eee #eee #5a5a5a"></div>
<div class="a" style="left:222.6px;top:411.2px;width:283.9px;height:9.4px;background:#c2c2c2;border-bottom:1px solid #555"></div>
<div class="a" style="left:294.0px;top:411.2px;width:1px;height:119.50000000000006px;background:#6e6e6e;"></div>
<div class="a" style="left:343.0px;top:411.2px;width:1px;height:119.50000000000006px;background:#6e6e6e;"></div>
<div class="a" style="left:433.0px;top:411.2px;width:1px;height:119.50000000000006px;background:#6e6e6e;"></div>
<div class="a" style="left:222.6px;top:429.9px;width:283.9px;height:1px;background:#b2b2b2;"></div>
<div class="a" style="left:222.6px;top:440.09999999999997px;width:283.9px;height:1px;background:#b2b2b2;"></div>
<div class="a" style="left:222.6px;top:450.3px;width:283.9px;height:1px;background:#b2b2b2;"></div>
<div class="a" style="left:222.6px;top:460.5px;width:283.9px;height:1px;background:#b2b2b2;"></div>
<div class="a" style="left:222.6px;top:470.7px;width:283.9px;height:1px;background:#b2b2b2;"></div>
<div class="a" style="left:222.6px;top:480.9px;width:283.9px;height:1px;background:#b2b2b2;"></div>
<div class="a" style="left:222.6px;top:491.09999999999997px;width:283.9px;height:1px;background:#b2b2b2;"></div>
<div class="a" style="left:222.6px;top:501.29999999999995px;width:283.9px;height:1px;background:#b2b2b2;"></div>
<div class="a" style="left:222.6px;top:511.5px;width:283.9px;height:1px;background:#b2b2b2;"></div>
<div class="a" style="left:222.6px;top:521.7px;width:283.9px;height:1px;background:#b2b2b2;"></div>
<div class="t" style="left:225.00px;top:412.27px;font-size:6.2px;color:#101010;transform:scaleX(0.8661);">Adresse</div>
<div class="t" style="left:297.20px;top:412.27px;font-size:6.2px;color:#101010;transform:scaleX(0.8786);">Wert</div>
<div class="t" style="left:346.50px;top:412.27px;font-size:6.2px;color:#101010;transform:scaleX(0.8650);">Objekt</div>
<div class="t" style="left:243.70px;top:423.72px;font-size:5.0px;color:#3a3a3a;font-family:'Liberation Mono',monospace;font-weight:bold;transform:scaleX(1.000);">MW00000</div>
<div class="t" style="left:296.30px;top:423.72px;font-size:5.0px;color:#3a3a3a;font-family:'Liberation Mono',monospace;font-weight:bold;transform:scaleX(1.000);">2048</div>
<div class="t" style="left:344.30px;top:423.72px;font-size:5.0px;color:#3a3a3a;font-family:'Liberation Mono',monospace;font-weight:bold;transform:scaleX(1.000);">Num. Anzeige Speicher</div>
<div class="t" style="left:243.70px;top:433.92px;font-size:5.0px;color:#3a3a3a;font-family:'Liberation Mono',monospace;font-weight:bold;transform:scaleX(1.000);">MW00002</div>
<div class="t" style="left:296.30px;top:433.92px;font-size:5.0px;color:#3a3a3a;font-family:'Liberation Mono',monospace;font-weight:bold;transform:scaleX(1.000);">0</div>
<div class="t" style="left:344.30px;top:433.92px;font-size:5.0px;color:#3a3a3a;font-family:'Liberation Mono',monospace;font-weight:bold;transform:scaleX(1.000);">Num. Anzeige Speicher</div>
<div class="t" style="left:243.70px;top:444.12px;font-size:5.0px;color:#3a3a3a;font-family:'Liberation Mono',monospace;font-weight:bold;transform:scaleX(1.000);">MW00004</div>
<div class="t" style="left:296.30px;top:444.12px;font-size:5.0px;color:#3a3a3a;font-family:'Liberation Mono',monospace;font-weight:bold;transform:scaleX(1.000);">95</div>
<div class="t" style="left:344.30px;top:444.12px;font-size:5.0px;color:#3a3a3a;font-family:'Liberation Mono',monospace;font-weight:bold;transform:scaleX(1.000);">Num. Anzeige Speicher</div>
<div class="t" style="left:243.70px;top:454.32px;font-size:5.0px;color:#3a3a3a;font-family:'Liberation Mono',monospace;font-weight:bold;transform:scaleX(1.000);">MW00006</div>
<div class="t" style="left:296.30px;top:454.32px;font-size:5.0px;color:#3a3a3a;font-family:'Liberation Mono',monospace;font-weight:bold;transform:scaleX(1.000);">0</div>
<div class="t" style="left:344.30px;top:454.32px;font-size:5.0px;color:#3a3a3a;font-family:'Liberation Mono',monospace;font-weight:bold;transform:scaleX(1.000);">Num. Anzeige Speicher</div>
<div class="t" style="left:243.70px;top:464.52px;font-size:5.0px;color:#3a3a3a;font-family:'Liberation Mono',monospace;font-weight:bold;transform:scaleX(1.000);">MW00008</div>
<div class="t" style="left:296.30px;top:464.52px;font-size:5.0px;color:#3a3a3a;font-family:'Liberation Mono',monospace;font-weight:bold;transform:scaleX(1.000);">0</div>
<div class="t" style="left:344.30px;top:464.52px;font-size:5.0px;color:#3a3a3a;font-family:'Liberation Mono',monospace;font-weight:bold;transform:scaleX(1.000);">Num. Anzeige Speicher</div>
<div class="t" style="left:243.70px;top:474.72px;font-size:5.0px;color:#3a3a3a;font-family:'Liberation Mono',monospace;font-weight:bold;transform:scaleX(1.000);">MW00090</div>
<div class="t" style="left:296.30px;top:474.72px;font-size:5.0px;color:#3a3a3a;font-family:'Liberation Mono',monospace;font-weight:bold;transform:scaleX(1.000);">0</div>
<div class="t" style="left:344.30px;top:474.72px;font-size:5.0px;color:#3a3a3a;font-family:'Liberation Mono',monospace;font-weight:bold;transform:scaleX(1.000);">Num. Anzeige Speicher</div>
<div class="t" style="left:243.70px;top:484.92px;font-size:5.0px;color:#3a3a3a;font-family:'Liberation Mono',monospace;font-weight:bold;transform:scaleX(1.000);">MW00092</div>
<div class="t" style="left:296.30px;top:484.92px;font-size:5.0px;color:#3a3a3a;font-family:'Liberation Mono',monospace;font-weight:bold;transform:scaleX(1.000);">0</div>
<div class="t" style="left:344.30px;top:484.92px;font-size:5.0px;color:#3a3a3a;font-family:'Liberation Mono',monospace;font-weight:bold;transform:scaleX(1.000);">Num. Anzeige Speicher</div>
<div class="t" style="left:243.70px;top:495.12px;font-size:5.0px;color:#3a3a3a;font-family:'Liberation Mono',monospace;font-weight:bold;transform:scaleX(1.000);">MW00094</div>
<div class="t" style="left:296.30px;top:495.12px;font-size:5.0px;color:#3a3a3a;font-family:'Liberation Mono',monospace;font-weight:bold;transform:scaleX(1.000);">0</div>
<div class="t" style="left:344.30px;top:495.12px;font-size:5.0px;color:#3a3a3a;font-family:'Liberation Mono',monospace;font-weight:bold;transform:scaleX(1.000);">Num. Anzeige Speicher</div>
<div class="t" style="left:243.70px;top:505.32px;font-size:5.0px;color:#3a3a3a;font-family:'Liberation Mono',monospace;font-weight:bold;transform:scaleX(1.000);">$uL5740</div>
<div class="t" style="left:296.30px;top:505.32px;font-size:5.0px;color:#3a3a3a;font-family:'Liberation Mono',monospace;font-weight:bold;transform:scaleX(1.000);">65535</div>
<div class="t" style="left:344.30px;top:505.32px;font-size:5.0px;color:#3a3a3a;font-family:'Liberation Mono',monospace;font-weight:bold;transform:scaleX(1.000);">Mehrfachüberlappung Speicher</div>
<div class="t" style="left:243.70px;top:515.52px;font-size:5.0px;color:#3a3a3a;font-family:'Liberation Mono',monospace;font-weight:bold;transform:scaleX(1.000);">$uL5741</div>
<div class="t" style="left:296.30px;top:515.52px;font-size:5.0px;color:#3a3a3a;font-family:'Liberation Mono',monospace;font-weight:bold;transform:scaleX(1.000);">0</div>
<div class="t" style="left:344.30px;top:515.52px;font-size:5.0px;color:#3a3a3a;font-family:'Liberation Mono',monospace;font-weight:bold;transform:scaleX(1.000);">Mehrfachüberlappung Speicher</div>
<div class="a" style="left:220.3px;top:533.8px;width:26px;height:11.2px;background:#c2c2c2;border:1px solid;border-color:#8a8a8a #555 #555 #e8e8e8"></div>
<div class="t" style="left:224.60px;top:536.38px;font-size:6.6px;color:#101010;transform:scaleX(0.8453);">System</div>
<div class="a" style="left:246.5px;top:532px;width:32px;height:14.8px;background:#c4c4c4;border:1px solid;border-color:#c6c6c6 #444 #444 #f4f4f4;border-top:none;border-radius:0 0 2px 2px"></div>
<div class="t" style="left:250.50px;top:537.78px;font-size:6.6px;color:#101010;transform:scaleX(0.8707);">Screen:2</div>
<div class="a" style="left:311px;top:549.3px;width:121px;height:10px;background:#bdbdbd;border:1px solid;border-color:#8a8a8a #e8e8e8 #e8e8e8 #8a8a8a"></div>
<div class="t" style="left:312.60px;top:550.89px;font-size:7.6px;color:#101010;transform:scaleX(0.8663);">MOELLER : PS4</div>
<div class="a" style="left:433.4px;top:549.3px;width:76px;height:10px;background:#bdbdbd;border:1px solid;border-color:#8a8a8a #e8e8e8 #e8e8e8 #8a8a8a"></div>
<div class="t" style="left:434.60px;top:550.89px;font-size:7.6px;color:#101010;transform:scaleX(0.9642);">Kommuniziert...</div>
<div class="a" style="left:0px;top:581px;width:709px;height:15px;background:#c4c4c4;"></div>
<div class="a" style="left:0px;top:581.5px;width:709px;height:1px;background:#f2f2f2;"></div>
<div class="t" style="left:0.90px;top:585.29px;font-size:7.8px;color:#101010;transform:scaleX(0.9374);">Bereit</div>
<div class="a" style="left:564px;top:584px;width:38.5px;height:10.5px;background:#c4c4c4;border:1px solid;border-color:#8a8a8a #f4f4f4 #f4f4f4 #8a8a8a"></div>
<div class="a" style="left:605px;top:584px;width:39px;height:10.5px;background:#c4c4c4;border:1px solid;border-color:#8a8a8a #f4f4f4 #f4f4f4 #8a8a8a"></div>
<div class="a" style="left:646px;top:584px;width:39px;height:10.5px;background:#c4c4c4;border:1px solid;border-color:#8a8a8a #f4f4f4 #f4f4f4 #8a8a8a"></div>
<div class="a" style="left:687px;top:584px;width:25px;height:10.5px;background:#c4c4c4;border:1px solid;border-color:#8a8a8a #f4f4f4 #f4f4f4 #8a8a8a"></div>
<div class="t" style="left:568.40px;top:585.49px;font-size:7.6px;color:#101010;transform:scaleX(0.9829);">10 : 521</div>
<div class="t" style="left:609.00px;top:585.49px;font-size:7.6px;color:#101010;transform:scaleX(0.9893);">Z: 150%</div>
<div class="a" style="left:0px;top:596px;width:709px;height:16px;background:#c4c4c4;"></div>
<div class="a" style="left:0.8px;top:596.6px;width:34.2px;height:13px;background:#c4c4c4;border:1px solid;border-color:#f4f4f4 #555 #555 #f4f4f4"></div>
<svg style="left:2.60px;top:598.10px" width="10" height="10" viewBox="0 0 10 10" preserveAspectRatio="none"><path d="M1 2Q3 1 4.5 2V5Q3 4 1 5Z" fill="#e03020"/><path d="M5 2Q7 3 9 2V5Q7 6 5 5Z" fill="#30a030"/><path d="M1 5.5Q3 4.5 4.5 5.5V8.5Q3 7.5 1 8.5Z" fill="#3050e0"/><path d="M5 5.5Q7 6.5 9 5.5V8.5Q7 9.5 5 8.5Z" fill="#f0c020"/></svg>
<div class="t" style="left:14.00px;top:599.49px;font-size:7.8px;color:#111;font-weight:bold;transform:scaleX(1.0523);">Start</div>
<div class="a" style="left:37px;top:596.6px;width:1px;height:12px;background:#8a8a8a;"></div>
<div class="a" style="left:38px;top:596.6px;width:1px;height:12px;background:#f4f4f4;"></div>
<div class="a" style="left:42.5px;top:596.6px;width:65.0px;height:13px;background:#c4c4c4;border:1px solid;border-color:#f4f4f4 #555 #555 #f4f4f4"></div>
<svg style="left:45.00px;top:598.10px" width="10" height="10" viewBox="0 0 10 10" preserveAspectRatio="none"><rect x="0.5" y="0.5" width="9" height="9" fill="#a0a010" stroke="#555" stroke-width="0.6"/><circle cx="5" cy="5" r="3" fill="#e8e8c0" stroke="#fff" stroke-width="0.8"/><path d="M5 3V5H7" stroke="#660" stroke-width="0.8" fill="none"/></svg>
<div class="t" style="left:56.50px;top:599.49px;font-size:7.8px;color:#111;transform:scaleX(0.9611);">Persönliche ...</div>
<div class="a" style="left:109px;top:596.6px;width:66px;height:13px;background:#c4c4c4;border:1px solid;border-color:#f4f4f4 #555 #555 #f4f4f4"></div>
<svg style="left:111.50px;top:598.10px" width="10" height="10" viewBox="0 0 10 10" preserveAspectRatio="none"><path d="M1 3L5 1L9 3V8L5 9.5L1 8Z" fill="#d8e4f8" stroke="#3858b0" stroke-width="0.8"/><path d="M3 5.5L5 7L8 2.5" stroke="#e0a020" stroke-width="1" fill="none"/><rect x="2" y="3" width="4" height="3" fill="#3060d0"/></svg>
<div class="t" style="left:123.50px;top:599.49px;font-size:7.8px;color:#111;transform:scaleX(0.9725);">Posteingang...</div>
<div class="a" style="left:176.5px;top:596.6px;width:66.0px;height:13px;background:#c4c4c4;border:1px solid;border-color:#f4f4f4 #555 #555 #f4f4f4"></div>
<svg style="left:179.00px;top:598.10px" width="10" height="10" viewBox="0 0 10 10" preserveAspectRatio="none"><circle cx="5" cy="5.3" r="3.8" fill="#40a0f0" stroke="#1858c0" stroke-width="0.9"/><path d="M2 5H8.5" stroke="#fff" stroke-width="1.1"/><path d="M0.5 8Q2 1.5 9.5 1" stroke="#f0c020" stroke-width="0.8" fill="none"/></svg>
<div class="t" style="left:192.00px;top:599.49px;font-size:7.8px;color:#111;transform:scaleX(1.0518);">2 Internet...</div>
<svg style="left:236.00px;top:601.60px" width="4" height="2.5" viewBox="0 0 4 2.5" preserveAspectRatio="none"><path d="M0 0H4L2 2.5Z" fill="#000"/></svg>
<div class="a" style="left:244px;top:596.6px;width:66px;height:13px;background:#e4e4e4;border:1px solid;border-color:#555 #f4f4f4 #f4f4f4 #555"></div>
<svg style="left:246.50px;top:598.10px" width="10" height="10" viewBox="0 0 10 10" preserveAspectRatio="none"><rect x="0" y="0" width="10" height="10" fill="#d01818"/><rect x="0.5" y="0.5" width="4.5" height="5" fill="#2040e0"/><path d="M4 10L10 3V10Z" fill="#f0d020"/><rect x="1" y="6" width="3.5" height="3.5" fill="#20a040"/><circle cx="5.5" cy="4.5" r="1.5" fill="#f8f8f8"/></svg>
<div class="t" style="left:260.50px;top:599.49px;font-size:7.8px;color:#111;font-weight:bold;transform:scaleX(1.0057);">2 V-SFT V...</div>
<svg style="left:304.50px;top:601.60px" width="4" height="2.5" viewBox="0 0 4 2.5" preserveAspectRatio="none"><path d="M0 0H4L2 2.5Z" fill="#000"/></svg>
<div class="a" style="left:311.5px;top:596.6px;width:64.5px;height:13px;background:#c4c4c4;border:1px solid;border-color:#f4f4f4 #555 #555 #f4f4f4"></div>
<svg style="left:314.00px;top:598.10px" width="10" height="10" viewBox="0 0 10 10" preserveAspectRatio="none"><rect x="0.5" y="1" width="9" height="7" fill="#2030a0" stroke="#888" stroke-width="0.8"/><rect x="2" y="2.5" width="3" height="2.5" fill="#f0e020"/><rect x="5.5" y="4" width="3" height="2.5" fill="#e04040"/><rect x="2" y="8.5" width="6" height="1" fill="#666"/></svg>
<div class="t" style="left:327.00px;top:599.49px;font-size:7.8px;color:#111;transform:scaleX(0.9558);">MI4 Konfigu...</div>
<div class="a" style="left:377.5px;top:596.6px;width:66.0px;height:13px;background:#c4c4c4;border:1px solid;border-color:#f4f4f4 #555 #555 #f4f4f4"></div>
<svg style="left:380.00px;top:598.10px" width="10" height="10" viewBox="0 0 10 10" preserveAspectRatio="none"><circle cx="5" cy="5" r="4.3" fill="#181860" stroke="#667" stroke-width="0.7"/><path d="M3 8L5.5 1.5L7 8" stroke="#e8e8f8" stroke-width="1.1" fill="none"/><path d="M2 6.5Q5 4 8.5 6" stroke="#80a0f0" stroke-width="0.7" fill="none"/></svg>
<div class="t" style="left:394.00px;top:599.49px;font-size:7.8px;color:#111;transform:scaleX(0.9336);">AutoCAD L...</div>
<div class="a" style="left:445px;top:596.6px;width:65.5px;height:13px;background:#c4c4c4;border:1px solid;border-color:#f4f4f4 #555 #555 #f4f4f4"></div>
<svg style="left:447.50px;top:598.10px" width="10" height="10" viewBox="0 0 10 10" preserveAspectRatio="none"><rect x="1" y="0.5" width="8" height="9" fill="#fff" stroke="#b02020" stroke-width="0.8"/><path d="M2.5 7Q5 1 5 3.5Q5 6 8 6.5Q5 6 2.5 7Z" stroke="#d01010" stroke-width="0.9" fill="none"/></svg>
<div class="t" style="left:462.50px;top:599.49px;font-size:7.8px;color:#111;transform:scaleX(0.8623);">Ver3 Refere...</div>
<div class="a" style="left:514px;top:596.6px;width:1px;height:12px;background:#8a8a8a;"></div>
<div class="a" style="left:515px;top:596.6px;width:1px;height:12px;background:#f4f4f4;"></div>
<svg style="left:522.50px;top:598.10px" width="9.5" height="10" viewBox="0 0 10 10" preserveAspectRatio="none"><circle cx="5" cy="5" r="4" fill="#60b0f0" stroke="#2060c0" stroke-width="0.9"/><rect x="3" y="2.5" width="4.5" height="5" fill="#fff" stroke="#2050a0" stroke-width="0.6"/><path d="M4 4H6.5M4 5.5H6.5" stroke="#2050a0" stroke-width="0.6"/></svg>
<svg style="left:537.50px;top:598.10px" width="10" height="10" viewBox="0 0 10 10" preserveAspectRatio="none"><circle cx="5" cy="5.3" r="3.8" fill="#40a0f0" stroke="#1858c0" stroke-width="0.9"/><path d="M2 5H8.5" stroke="#fff" stroke-width="1.1"/><path d="M0.5 8Q2 1.5 9.5 1" stroke="#f0c020" stroke-width="0.8" fill="none"/></svg>
<svg style="left:553.00px;top:598.10px" width="10" height="10" viewBox="0 0 10 10" preserveAspectRatio="none"><path d="M1 3L5 1L9 3V8L5 9.5L1 8Z" fill="#d8e4f8" stroke="#3858b0" stroke-width="0.8"/><rect x="2" y="3" width="4" height="3" fill="#3060d0"/><path d="M3 5.5L5 7L8 2.5" stroke="#e0a020" stroke-width="1" fill="none"/></svg>
<div class="t" style="left:572.00px;top:598.18px;font-size:7px;color:#111;font-weight:bold;transform:scaleX(1.0275);">»</div>
<div class="a" style="left:580px;top:596.6px;width:1px;height:12px;background:#8a8a8a;"></div>
<div class="a" style="left:581px;top:596.6px;width:1px;height:12px;background:#f4f4f4;"></div>
<div class="a" style="left:586.5px;top:597.6px;width:11.5px;height:11px;background:#1c1c98;"></div>
<div class="t" style="left:588.50px;top:599.68px;font-size:7.2px;color:#fff;transform:scaleX(0.7998);">DE</div>
<div class="a" style="left:606px;top:597.6px;width:10px;height:11px;background:#f4f0a0;border:1px solid #444;box-shadow:1px 1px 0 #333"></div>
<div class="t" style="left:608.80px;top:599.29px;font-size:8px;color:#111;font-weight:bold;transform:scaleX(0.8595);">?</div>
<svg style="left:622.00px;top:597.60px" width="5" height="4" viewBox="0 0 5 4" preserveAspectRatio="none"><rect x="0" y="1" width="5" height="3" fill="#444"/><rect x="1" y="0" width="3" height="1.5" fill="#666"/></svg>
<svg style="left:622.50px;top:605.10px" width="4" height="2.5" viewBox="0 0 4 2.5" preserveAspectRatio="none"><path d="M0 0H4L2 2.5Z" fill="#000"/></svg>
<div class="a" style="left:631px;top:596.6px;width:1px;height:12px;background:#8a8a8a;"></div>
<div class="a" style="left:632px;top:596.6px;width:1px;height:12px;background:#f4f4f4;"></div>
<div class="a" style="left:637.5px;top:597.1px;width:68px;height:12px;background:#fff;border:1px solid;border-color:#666 #f4f4f4 #f4f4f4 #666"></div>
<div class="t" style="left:641.00px;top:599.49px;font-size:7.6px;color:#8a8a8a;transform:scaleX(0.8842);">Desktop durchsuchen</div>
<div class="a" style="left:705px;top:597.1px;width:4px;height:12px;background:#c4c4c4;"></div>
<svg style="left:704.50px;top:599.10px" width="5" height="8" viewBox="0 0 5 8" preserveAspectRatio="none"><circle cx="2.5" cy="3" r="2" fill="none" stroke="#3060c0" stroke-width="1"/><path d="M1.5 5L0 8" stroke="#3060c0" stroke-width="1.2"/></svg>
</div>
</body></html>
